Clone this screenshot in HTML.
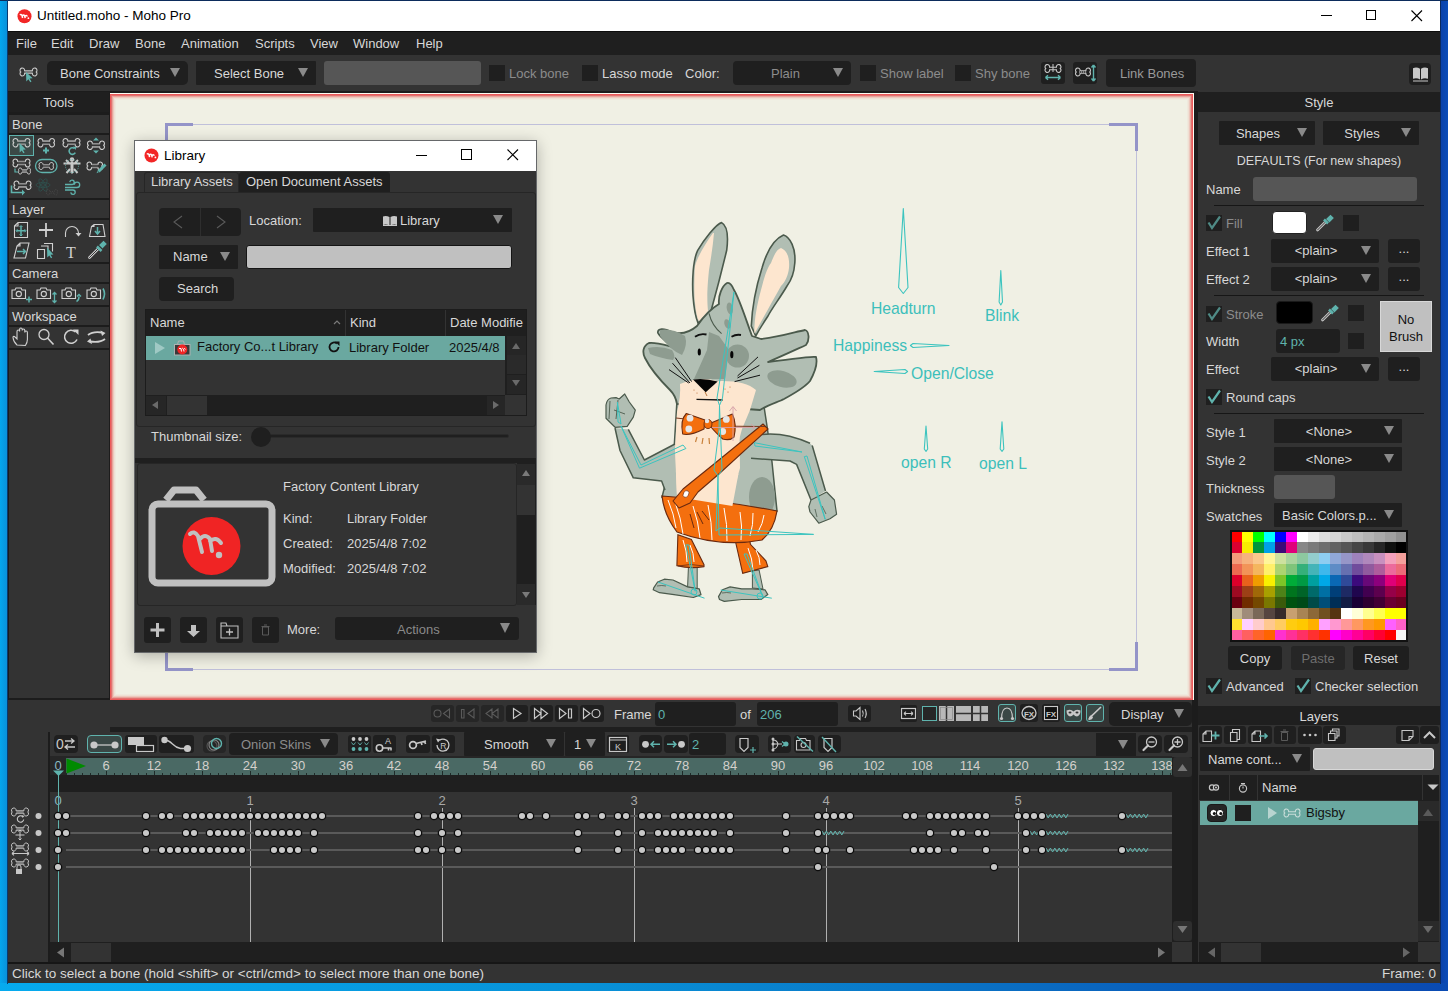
<!DOCTYPE html>
<html><head><meta charset="utf-8">
<style>
*{box-sizing:border-box;margin:0;padding:0}
html,body{width:1448px;height:991px;overflow:hidden;background:#0a62c8;font-family:"Liberation Sans",sans-serif;font-size:13px;color:#d8d8d8;position:relative}
.a{position:absolute}
.t{position:absolute;white-space:nowrap;line-height:13px;height:13px}
.g{color:#8c8c8c}
svg{overflow:visible}
</style></head>
<body>
<div class="a" style="left:0px;top:0px;width:8px;height:991px;background:linear-gradient(90deg,#04a6ee,#0a8ed8);"></div>
<div class="a" style="left:1440px;top:0px;width:8px;height:991px;background:linear-gradient(90deg,#0a40a8,#0a4cb8);"></div>
<div class="a" style="left:0px;top:983px;width:1448px;height:8px;background:linear-gradient(90deg,#06aaee 0%,#0892d8 40%,#0a78c8 62%,#0a60bc 80%,#0a4ab2 100%);"></div>
<div class="a" style="left:0px;top:0px;width:1448px;height:1px;background:#0c2c5c;"></div>
<div class="a" style="left:7px;top:0px;width:1px;height:984px;background:#0a3a70;"></div>
<div class="a" style="left:1440px;top:0px;width:1px;height:984px;background:#0a2a60;"></div>
<div class="a" style="left:8px;top:1px;width:1432px;height:982px;background:#333;"></div>
<div class="a" style="left:8px;top:1px;width:1432px;height:30px;background:#fff;"></div>
<svg class="a" style="left:17px;top:9px;" width="15" height="15" viewBox="0 0 15 15"><circle cx="7.5" cy="7.3" r="7" fill="#f22626"/><path d="M3 6.2q1-1.6 2 0.2l0.6 2.6M5.4 7q1.2-1.8 2.3 0l0.5 2.2M8 7.2q1.4-1.6 2.4 0.3" stroke="#fff" stroke-width="1.5" fill="none"/><circle cx="11.4" cy="9.2" r="0.9" fill="#fff"/></svg>
<div class="t" style="left:37px;top:9px;color:#000;font-size:13.5px;">Untitled.moho - Moho Pro</div>
<div class="a" style="left:1321px;top:15px;width:11px;height:1px;background:#000;"></div>
<div class="a" style="left:1366px;top:10px;width:10px;height:10px;background:transparent;border:1px solid #000"></div>
<svg class="a" style="left:1411px;top:10px;" width="12" height="12" viewBox="0 0 12 12"><path d="M0.5 0.5L11 11M11 0.5L0.5 11" stroke="#000" stroke-width="1.1"/></svg>
<div class="a" style="left:8px;top:31px;width:1432px;height:24px;background:#1f1f1f;border-top:1px solid #0c0c0c"></div>
<div class="t" style="left:16px;top:37px;">File</div>
<div class="t" style="left:51px;top:37px;">Edit</div>
<div class="t" style="left:89px;top:37px;">Draw</div>
<div class="t" style="left:135px;top:37px;">Bone</div>
<div class="t" style="left:181px;top:37px;">Animation</div>
<div class="t" style="left:255px;top:37px;">Scripts</div>
<div class="t" style="left:310px;top:37px;">View</div>
<div class="t" style="left:353px;top:37px;">Window</div>
<div class="t" style="left:416px;top:37px;">Help</div>
<div class="a" style="left:8px;top:55px;width:1432px;height:36px;background:#333;"></div>
<svg class="a" style="left:18px;top:63px;" width="24" height="22" viewBox="0 0 24 22"><path d="M6.59 7.80H14.41A2.32 2.32 0 1 1 18.28 9.00A2.32 2.32 0 1 1 14.41 10.20H6.59A2.32 2.32 0 1 1 2.72 9.00A2.32 2.32 0 1 1 6.59 7.80Z" fill="none" stroke="#c8c8c8" stroke-width="1.1"/><path d="M6.5 9H14.5" stroke="#8a8a8a" stroke-width="1.5"/><path d="M8 9l0.3 9.5l2.1-2.2l1.9 3l1.2-0.7l-1.9-3l3.1-0.3z" fill="#5fb3ad"/></svg>
<div class="a" style="left:47px;top:61px;width:141px;height:24px;background:#1f1f1f;border-radius:5px"></div><div class="t" style="left:60px;top:67px;">Bone Constraints</div><div class="a" style="left:170px;top:68px;width:0;height:0;border-left:5.0px solid transparent;border-right:5.0px solid transparent;border-top:9px solid #8a8a8a"></div>
<div class="a" style="left:196px;top:61px;width:120px;height:24px;background:#1f1f1f;border-radius:1px"></div><div class="t" style="left:214px;top:67px;">Select Bone</div><div class="a" style="left:298px;top:68px;width:0;height:0;border-left:5.0px solid transparent;border-right:5.0px solid transparent;border-top:9px solid #8a8a8a"></div>
<div class="a" style="left:324px;top:61px;width:157px;height:24px;background:#565656;border-radius:3px"></div>
<div class="a" style="left:489px;top:65px;width:16px;height:16px;background:#1f1f1f;"></div>
<div class="t" style="left:509px;top:67px;color:#8c8c8c;">Lock bone</div>
<div class="a" style="left:582px;top:65px;width:16px;height:16px;background:#1f1f1f;"></div>
<div class="t" style="left:602px;top:67px;">Lasso mode</div>
<div class="t" style="left:685px;top:67px;">Color:</div>
<div class="a" style="left:733px;top:61px;width:118px;height:24px;background:#1f1f1f;border-radius:4px"></div><div class="t" style="left:771px;top:67px;color:#8c8c8c;">Plain</div><div class="a" style="left:833px;top:68px;width:0;height:0;border-left:5.0px solid transparent;border-right:5.0px solid transparent;border-top:9px solid #8a8a8a"></div>
<div class="a" style="left:860px;top:65px;width:16px;height:16px;background:#1f1f1f;"></div>
<div class="t" style="left:880px;top:67px;color:#8c8c8c;">Show label</div>
<div class="a" style="left:955px;top:65px;width:16px;height:16px;background:#1f1f1f;"></div>
<div class="t" style="left:975px;top:67px;color:#8c8c8c;">Shy bone</div>
<div class="a" style="left:1041px;top:62px;width:24px;height:22px;background:#1f1f1f;border-radius:3px"></div>
<svg class="a" style="left:1043px;top:63px;" width="20" height="20" viewBox="0 0 20 20"><path d="M6.59 4.30H13.41A2.32 2.32 0 1 1 17.28 5.50A2.32 2.32 0 1 1 13.41 6.70H6.59A2.32 2.32 0 1 1 2.72 5.50A2.32 2.32 0 1 1 6.59 4.30Z" fill="none" stroke="#c8c8c8" stroke-width="1.1"/><path d="M10 1v8" stroke="#c8c8c8" stroke-width="1"/><path d="M2.5 14.5h15M2.5 14.5l2.5-2.2M2.5 14.5l2.5 2.2M17.5 14.5l-2.5-2.2M17.5 14.5l-2.5 2.2" stroke="#5fb3ad" stroke-width="1.4" fill="none"/></svg>
<div class="a" style="left:1073px;top:62px;width:24px;height:22px;background:#1f1f1f;border-radius:3px"></div>
<svg class="a" style="left:1074px;top:63px;" width="22" height="20" viewBox="0 0 22 20"><path d="M6.09 7.80H11.91A2.32 2.32 0 1 1 15.78 9.00A2.32 2.32 0 1 1 11.91 10.20H6.09A2.32 2.32 0 1 1 2.22 9.00A2.32 2.32 0 1 1 6.09 7.80Z" fill="none" stroke="#c8c8c8" stroke-width="1.1"/><path d="M5 9h8" stroke="#c8c8c8" stroke-width="1" stroke-dasharray="1 1"/><path d="M19.5 2v16M19.5 2l-2 2.5M19.5 2l2 2.5M19.5 18l-2-2.5M19.5 18l2-2.5" stroke="#5fb3ad" stroke-width="1.4" fill="none"/></svg>
<div class="a" style="left:1106px;top:59px;width:90px;height:28px;background:#1f1f1f;border-radius:4px"></div>
<div class="t" style="left:1120px;top:67px;color:#9a9a9a;">Link Bones</div>
<div class="a" style="left:1409px;top:63px;width:22px;height:22px;background:#1f1f1f;border-radius:4px"></div>
<svg class="a" style="left:1412px;top:66px;" width="17" height="16" viewBox="0 0 17 16"><path d="M1 2.2q3.8-1.4 7 0.6v10.6q-3.2-1.8-7-0.6z M9 2.8q3.2-2 7-0.6v10.6q-3.8-1.2-7 0.6z" fill="#c8c8c8"/><path d="M1 15h15" stroke="#c8c8c8" stroke-width="1"/></svg>
<div class="a" style="left:8px;top:91px;width:101px;height:609px;background:#1c1c1c;"></div>
<div class="a" style="left:8px;top:92px;width:101px;height:20px;background:#1f1f1f;"></div>
<div class="t" style="left:8px;top:96px;width:101px;text-align:center;">Tools</div>
<div class="a" style="left:9px;top:115px;width:100px;height:18px;background:#333;"></div>
<div class="t" style="left:12px;top:118px;">Bone</div>
<div class="a" style="left:9px;top:135px;width:100px;height:63px;background:#333;"></div>
<div class="a" style="left:9px;top:200px;width:100px;height:18px;background:#333;"></div>
<div class="t" style="left:12px;top:203px;">Layer</div>
<div class="a" style="left:9px;top:220px;width:100px;height:42px;background:#333;"></div>
<div class="a" style="left:9px;top:264px;width:100px;height:18px;background:#333;"></div>
<div class="t" style="left:12px;top:267px;">Camera</div>
<div class="a" style="left:9px;top:284px;width:100px;height:21px;background:#333;"></div>
<div class="a" style="left:9px;top:307px;width:100px;height:18px;background:#333;"></div>
<div class="t" style="left:12px;top:310px;">Workspace</div>
<div class="a" style="left:9px;top:327px;width:100px;height:21px;background:#333;"></div>
<div class="a" style="left:9px;top:350px;width:100px;height:349px;background:#333;"></div>
<div class="a" style="left:9px;top:135px;width:25px;height:21px;background:#3b4947;border:1px solid #5fb3ad"></div>
<svg class="a" style="left:0px;top:0px;pointer-events:none" width="1448" height="991" viewBox="0 0 1448 991"><path d="M17.92 141.13H25.08A2.46 2.46 0 1 1 29.23 142.75A2.46 2.46 0 1 1 25.08 144.37H17.92A2.46 2.46 0 1 1 13.77 142.75A2.46 2.46 0 1 1 17.92 141.13Z" fill="none" stroke="#d0d0d0" stroke-width="1.1"/><path d="M17.92 141.13H25.08M17.92 144.37H25.08" stroke="#8e8e8e" stroke-width="1.4"/><path d="M19.5 143l0.2 9.5l2-2l1.7 2.8l1.2-0.7l-1.7-2.8l2.9-0.4z" fill="#5fb3ad"/><path d="M42.92 141.13H49.58A2.46 2.46 0 1 1 53.73 142.75A2.46 2.46 0 1 1 49.58 144.37H42.92A2.46 2.46 0 1 1 38.77 142.75A2.46 2.46 0 1 1 42.92 141.13Z" fill="none" stroke="#d0d0d0" stroke-width="1.1"/><path d="M42.92 141.13H49.58M42.92 144.37H49.58" stroke="#8e8e8e" stroke-width="1.4"/><path d="M46 147.5v6M43 150.5h6" stroke="#5fb3ad" stroke-width="2"/><path d="M67.92 141.13H75.08A2.46 2.46 0 1 1 79.23 142.75A2.46 2.46 0 1 1 75.08 144.37H67.92A2.46 2.46 0 1 1 63.77 142.75A2.46 2.46 0 1 1 67.92 141.13Z" fill="none" stroke="#d0d0d0" stroke-width="1.1"/><path d="M67.92 141.13H75.08M67.92 144.37H75.08" stroke="#8e8e8e" stroke-width="1.4"/><path d="M74.5 148.5a3.3 3.3 0 1 0 0.8 4.2" stroke="#5fb3ad" stroke-width="1.6" fill="none"/><path d="M73 146.5l3.5 0.5l-1 3z" fill="#5fb3ad"/><path d="M92.42 143.63H99.58A2.46 2.46 0 1 1 103.73 145.25A2.46 2.46 0 1 1 99.58 146.87H92.42A2.46 2.46 0 1 1 88.27 145.25A2.46 2.46 0 1 1 92.42 143.63Z" fill="none" stroke="#d0d0d0" stroke-width="1.1"/><path d="M92.42 143.63H99.58M92.42 146.87H99.58" stroke="#8e8e8e" stroke-width="1.4"/><path d="M93 140.5l3-3l3 3z M93 150.5l3 3l3-3z" fill="#5fb3ad"/><path d="M17.63 161.48H25.37A2.32 2.32 0 1 1 29.28 163.00A2.32 2.32 0 1 1 25.37 164.52H17.63A2.32 2.32 0 1 1 13.72 163.00A2.32 2.32 0 1 1 17.63 161.48Z" fill="none" stroke="#d0d0d0" stroke-width="1.1"/><path d="M17.63 161.48H25.37M17.63 164.52H25.37" stroke="#8e8e8e" stroke-width="1.4"/><path d="M21.98 169.86H27.02A1.74 1.74 0 1 1 29.96 171.00A1.74 1.74 0 1 1 27.02 172.14H21.98A1.74 1.74 0 1 1 19.04 171.00A1.74 1.74 0 1 1 21.98 169.86Z" fill="none" stroke="#d0d0d0" stroke-width="1"/><path d="M21.98 169.86H27.02M21.98 172.14H27.02" stroke="#8e8e8e" stroke-width="1.4"/><path d="M15 168.5v3.5h3" stroke="#5fb3ad" stroke-width="1.2" fill="none"/><rect x="35.5" y="159.5" width="21.5" height="13" rx="6.5" fill="none" stroke="#5fb3ad" stroke-width="1.3"/><path d="M43.06 164.67H49.44A2.03 2.03 0 1 1 52.87 166.00A2.03 2.03 0 1 1 49.44 167.33H43.06A2.03 2.03 0 1 1 39.63 166.00A2.03 2.03 0 1 1 43.06 164.67Z" fill="none" stroke="#d0d0d0" stroke-width="1"/><path d="M43.06 164.67H49.44M43.06 167.33H49.44" stroke="#8e8e8e" stroke-width="1.4"/><circle cx="72" cy="159.5" r="2.2" fill="#c8c8c8"/><path d="M72 161.5v12M63.5 163.5h17M66 160l4 4M78 160l-4 4M66.5 173l3.5-4M77.5 173l-3.5-4" stroke="#c8c8c8" stroke-width="2"/><path d="M72 162v11" stroke="#c8c8c8" stroke-width="3"/><circle cx="72" cy="166" r="6.5" fill="none" stroke="#5fb3ad" stroke-width="0.8" stroke-dasharray="1 1"/><path d="M91.63 164.48H97.87A2.32 2.32 0 1 1 101.78 166.00A2.32 2.32 0 1 1 97.87 167.52H91.63A2.32 2.32 0 1 1 87.72 166.00A2.32 2.32 0 1 1 91.63 164.48Z" fill="none" stroke="#d0d0d0" stroke-width="1.1"/><path d="M91.63 164.48H97.87M91.63 167.52H97.87" stroke="#8e8e8e" stroke-width="1.4"/><path d="M105.5 164.5l-7 7" stroke="#5fb3ad" stroke-width="3"/><path d="M97.5 171l-1 2.2l2.2-1z" fill="#5fb3ad"/><path d="M18.92 183.63H26.08A2.46 2.46 0 1 1 30.23 185.25A2.46 2.46 0 1 1 26.08 186.87H18.92A2.46 2.46 0 1 1 14.77 185.25A2.46 2.46 0 1 1 18.92 183.63Z" fill="none" stroke="#d0d0d0" stroke-width="1.1"/><path d="M18.92 183.63H26.08M18.92 186.87H26.08" stroke="#8e8e8e" stroke-width="1.4"/><path d="M11.5 185.5v7h11" stroke="#5fb3ad" stroke-width="1.6" fill="none"/><path d="M22 189.5l3 3l-3 3z" fill="#5fb3ad"/><g stroke="#2e5350" stroke-width="0.7" fill="none"><circle cx="43" cy="185" r="1.5"/><ellipse cx="43" cy="185" rx="7" ry="2.5"/><ellipse cx="43" cy="185" rx="7" ry="2.5" transform="rotate(60 43 185)"/><ellipse cx="43" cy="185" rx="7" ry="2.5" transform="rotate(-60 43 185)"/></g><path d="M49.66 191.43H54.34A1.59 1.59 0 1 1 57.01 192.25A1.59 1.59 0 1 1 54.34 193.07H49.66A1.59 1.59 0 1 1 46.99 192.25A1.59 1.59 0 1 1 49.66 191.43Z" fill="none" stroke="#4a4a4a" stroke-width="0.8" stroke-dasharray="1.2 1"/><path d="M65 184.5h7a2.2 2.2 0 1 0 -2.2-2.4M65 187.5h12a2.7 2.7 0 1 0 -2.7-2.9M65 190h8a2.2 2.2 0 1 1 -2.2 2.4" stroke="#5fb3ad" stroke-width="1.3" fill="none"/><path d="M14.5 226l3.5-3.5h9.5v15h-13z M14.5 226h3.5v-3.5" fill="none" stroke="#d0d0d0" stroke-width="1.1"/><path d="M21 226v9.5M16.5 230.7h9" stroke="#5fb3ad" stroke-width="1.5"/><path d="M19.5 227l1.5-1.5l1.5 1.5M19.5 234.5l1.5 1.5l1.5-1.5M17.5 229.2l-1.5 1.5l1.5 1.5M24.5 229.2l1.5 1.5l-1.5 1.5" stroke="#5fb3ad" stroke-width="1" fill="none"/><path d="M46 223v14M39 230h14" stroke="#d0d0d0" stroke-width="1.8"/><path d="M65.5 237v-4a6.5 6.5 0 0 1 13 0" fill="none" stroke="#d0d0d0" stroke-width="1.1"/><path d="M75.5 233h6l-3 3.5z" fill="#d0d0d0"/><path d="M89.5 236.5l2-10l2.5-2h9l2 12z M91.5 226.5h2.5v-2.2" fill="none" stroke="#d0d0d0" stroke-width="1.1"/><path d="M97.5 227v6.5M95 231l2.5 3l2.5-3" stroke="#5fb3ad" stroke-width="1.5" fill="none"/><path d="M14 258l3-12l3-3h9l-3.5 15z M17 246h3v-3" fill="none" stroke="#d0d0d0" stroke-width="1.1"/><path d="M17 251.5h8M23 249l2.5 2.5l-2.5 2.5" stroke="#5fb3ad" stroke-width="1.5" fill="none"/><path d="M37.5 249.5h7v9h-7z M41 246h7v3.5" fill="none" stroke="#d0d0d0" stroke-width="1.1"/><path d="M44 243.5h8.5v8" fill="none" stroke="#d0d0d0" stroke-width="1.1"/><path d="M47 247.5l0.3 10l2-2l1.7 2.8l1.2-0.7l-1.7-2.8l2.9-0.3z" fill="#5fb3ad"/><text x="71" y="257.5" font-family="Liberation Serif" font-size="16" fill="#d0d0d0" text-anchor="middle">T</text><path d="M89.5 257.5l8.5-8.5" stroke="#d0d0d0" stroke-width="2.6" stroke-linecap="round"/><path d="M89.5 257.5l8.5-8.5" stroke="#333" stroke-width="1" stroke-linecap="round"/><path d="M97 246.5l4.5 4.5M100 246l3.5-3.5l1.5 1.5l-3.5 3.5" stroke="#5fb3ad" stroke-width="2.5"/><path d="M12 290.0h3l1-2h5l1 2h3.5v8.5h-13.5z" fill="none" stroke="#d0d0d0" stroke-width="1.1"/><circle cx="18.8" cy="294.0" r="2.6" fill="none" stroke="#d0d0d0" stroke-width="1.1"/><path d="M29 296.5v6M26 299.5h6" stroke="#5fb3ad" stroke-width="1.5"/><path d="M37 290.0h3l1-2h5l1 2h3.5v8.5h-13.5z" fill="none" stroke="#d0d0d0" stroke-width="1.1"/><circle cx="43.8" cy="294.0" r="2.6" fill="none" stroke="#d0d0d0" stroke-width="1.1"/><path d="M54.5 292.5v10M52.5 294.5l2-2l2 2M52.5 300.5l2 2l2-2" stroke="#5fb3ad" stroke-width="1.3" fill="none"/><path d="M62 290.0h3l1-2h5l1 2h3.5v8.5h-13.5z" fill="none" stroke="#d0d0d0" stroke-width="1.1"/><circle cx="68.8" cy="294.0" r="2.6" fill="none" stroke="#d0d0d0" stroke-width="1.1"/><path d="M76.5 301.5q2.5-1 2.5-5M77 296.5l2-2l2 2" stroke="#5fb3ad" stroke-width="1.4" fill="none"/><path d="M87 290.0h3l1-2h5l1 2h3.5v8.5h-13.5z" fill="none" stroke="#d0d0d0" stroke-width="1.1"/><circle cx="93.8" cy="294.0" r="2.6" fill="none" stroke="#d0d0d0" stroke-width="1.1"/><path d="M103 288.5q3 5 0 11" stroke="#5fb3ad" stroke-width="1.6" fill="none"/><path d="M17 345q-3.5-3-4-7.5q0-1.5 1.5-1l2.5 2.5v-7.5q0-1.5 1.3-1.5t1.3 1.5v-2q0-1.5 1.3-1.5t1.3 1.5v1q0-1.5 1.3-1.5t1.3 1.5v2q0-1.5 1.3-1.5t1.3 1.5v7q0 3-2 6z" fill="none" stroke="#d0d0d0" stroke-width="1.1"/><circle cx="44" cy="334.5" r="5" fill="none" stroke="#d0d0d0" stroke-width="1.3"/><path d="M47.5 338l6 6.5" stroke="#d0d0d0" stroke-width="1.6"/><path d="M77 339.5a6.5 6.5 0 1 1 -1.5-7.5" fill="none" stroke="#d0d0d0" stroke-width="1.6"/><path d="M73 329.5h5.5v5.5z" fill="#d0d0d0"/><path d="M88 335q5-4 14-2.5M105 339q-5 4-15 2.5" fill="none" stroke="#d0d0d0" stroke-width="1.8"/><path d="M100.5 330.5l5 2.5l-3.5 3z M92 344l-5-2.5l3.5-3z" fill="#d0d0d0"/></svg>
<div class="a" style="left:109px;top:91px;width:1089px;height:610px;background:#1c1c1c;"></div>
<div class="a" style="left:110px;top:93px;width:1084px;height:607px;background:#f0f0e4;"></div>
<div class="a" style="left:110px;top:94px;width:1px;height:606px;background:rgba(236,90,90,1);"></div>
<div class="a" style="left:1192px;top:94px;width:1px;height:606px;background:rgba(236,90,90,1);"></div>
<div class="a" style="left:111px;top:94px;width:1081px;height:1px;background:rgba(236,90,90,1);"></div>
<div class="a" style="left:111px;top:699px;width:1081px;height:1px;background:rgba(236,90,90,1);"></div>
<div class="a" style="left:111px;top:95px;width:1px;height:604px;background:rgba(226,106,106,0.95);"></div>
<div class="a" style="left:1191px;top:95px;width:1px;height:604px;background:rgba(226,106,106,0.95);"></div>
<div class="a" style="left:112px;top:95px;width:1079px;height:1px;background:rgba(226,106,106,0.95);"></div>
<div class="a" style="left:112px;top:698px;width:1079px;height:1px;background:rgba(226,106,106,0.95);"></div>
<div class="a" style="left:112px;top:96px;width:1px;height:602px;background:rgba(228,120,110,0.62);"></div>
<div class="a" style="left:1190px;top:96px;width:1px;height:602px;background:rgba(228,120,110,0.62);"></div>
<div class="a" style="left:113px;top:96px;width:1077px;height:1px;background:rgba(228,120,110,0.62);"></div>
<div class="a" style="left:113px;top:697px;width:1077px;height:1px;background:rgba(228,120,110,0.62);"></div>
<div class="a" style="left:113px;top:97px;width:1px;height:600px;background:rgba(232,110,100,0.30);"></div>
<div class="a" style="left:1189px;top:97px;width:1px;height:600px;background:rgba(232,110,100,0.30);"></div>
<div class="a" style="left:114px;top:97px;width:1075px;height:1px;background:rgba(232,110,100,0.30);"></div>
<div class="a" style="left:114px;top:696px;width:1075px;height:1px;background:rgba(232,110,100,0.30);"></div>
<div class="a" style="left:114px;top:98px;width:1px;height:598px;background:rgba(232,110,100,0.13);"></div>
<div class="a" style="left:1188px;top:98px;width:1px;height:598px;background:rgba(232,110,100,0.13);"></div>
<div class="a" style="left:115px;top:98px;width:1073px;height:1px;background:rgba(232,110,100,0.13);"></div>
<div class="a" style="left:115px;top:695px;width:1073px;height:1px;background:rgba(232,110,100,0.13);"></div>
<div class="a" style="left:115px;top:99px;width:1px;height:596px;background:rgba(232,110,100,0.05);"></div>
<div class="a" style="left:1187px;top:99px;width:1px;height:596px;background:rgba(232,110,100,0.05);"></div>
<div class="a" style="left:116px;top:99px;width:1071px;height:1px;background:rgba(232,110,100,0.05);"></div>
<div class="a" style="left:116px;top:694px;width:1071px;height:1px;background:rgba(232,110,100,0.05);"></div>
<div class="a" style="left:110px;top:93px;width:1084px;height:1px;background:#fbfbf2;"></div>
<div class="a" style="left:1193px;top:93px;width:1px;height:607px;background:#fbfbf2;"></div>
<svg class="a" style="left:0px;top:0px;pointer-events:none" width="1448" height="991" viewBox="0 0 1448 991"><path d="M166.5 124.5H1136.5V669.5H166.5Z" fill="none" stroke="#c0c0da" stroke-width="1"/><path d="M166.5 151V124.5H193" fill="none" stroke="#9494c8" stroke-width="3"/><path d="M1109 124.5H1136.5V151" fill="none" stroke="#9494c8" stroke-width="3"/><path d="M1136.5 642V669.5H1109" fill="none" stroke="#9494c8" stroke-width="3"/><path d="M193 669.5H166.5V642" fill="none" stroke="#9494c8" stroke-width="3"/><path d="M721.6 222.6C716 224 704 240 697.7 250.3C693 260 692 280 693 296C694 310 696 318 698 323L711 311C716 293 722 270 726.7 250.3C728 240 728 226 721.6 222.6Z" fill="#b1beb3" stroke="#4b5a4c" stroke-width="1.6"/><path d="M713 233C705 244 697 258 695 266C694 280 694 295 695 303C696 312 697 318 699 321L708 311C707 300 707 290 709 270C711 258 713 245 714 233Z" fill="#fde6cf"/><path d="M783.5 235C790 237 796 248 794.8 263C794 275 790 282 787 286C780 298 772 308 768 316C764 322 759 330 755.7 336L751.3 326C752 310 755 290 762 268C766 254 772 240 783.5 235Z" fill="#b1beb3" stroke="#4b5a4c" stroke-width="1.6"/><path d="M781 248C786 250 790 256 789 268C788 276 785 282 781 286C772 302 762 320 754.4 333.6C754 320 757 305 760.8 290.7C764 278 767 268 771 263C774 255 777 249 781 248Z" fill="#fde6cf"/><path d="M677 400L674 450L662 497L777 511L772 462L767 426L763 400Z" fill="#b1beb3" stroke="#4b5a4c" stroke-width="1.5"/><path d="M680 405L739 405L740 468L732 497L677 497L675 450Z" fill="#fde6cf"/><ellipse cx="762" cy="497" rx="13" ry="20" fill="#8e9c90"/><path d="M675 444L644.4 460L628.3 429.4L615 428L620 450.5L633.3 477.8L661.6 481L665 490L676 470Z" fill="#b1beb3"/><path d="M675 444L644.4 460L628.3 429.4M615 428L620 450.5L633.3 477.8L661.6 481L665 490" fill="none" stroke="#4b5a4c" stroke-width="1.5" stroke-linejoin="round"/><path d="M606 405Q607 399 611 398L616 397.6L619.2 399L624.7 394L629.3 402L635.3 410.2L633.3 417.2L627.2 426.3L615.1 427.3L606 418.3Z" fill="#b1beb3" stroke="#4b5a4c" stroke-width="1.2" stroke-linejoin="round"/><path d="M610 401L609 419M618 400L616 419M614 410L625 414" stroke="#4b5a4c" stroke-width="0.9" fill="none"/><path d="M762 434.4Q785 432 810 443.3L812.2 445.5L825.5 491L811 500L796.6 464.4L790 461L751 458.3L755 440Z" fill="#b1beb3"/><path d="M762 434.4Q785 432 810 443.3M812.2 445.5L825.5 491M811 500L796.6 464.4L790 461L751 458.3" fill="none" stroke="#4b5a4c" stroke-width="1.5" stroke-linejoin="round"/><path d="M808.8 506.6L810 512L818.8 523.2L830 518.8L836.6 514.3L834.4 500L826.6 492L811 500Z" fill="#b1beb3" stroke="#4b5a4c" stroke-width="1.2" stroke-linejoin="round"/><path d="M815 509L817 517M822 506L826 514" stroke="#4b5a4c" stroke-width="0.8" fill="none"/><path d="M688.5 565L697.2 565L697.2 589L687.6 587Z" fill="#b1beb3" stroke="#4b5a4c" stroke-width="1"/><path d="M752.4 571L759.1 570L763 589L752.4 588Z" fill="#b1beb3" stroke="#4b5a4c" stroke-width="1"/><path d="M653.7 587.9L657.6 582L664.3 579.2L673 580L687.6 586.9L699.2 588.8L701 594.6L693.4 597.5L674 594.6L659.5 592.7L653.2 589.8Z" fill="#b1beb3" stroke="#4b5a4c" stroke-width="1.2" stroke-linejoin="round"/><path d="M718.5 596.6L722.4 589.8L730.1 586.9L741.7 588.8L752.4 588.8L765 589.8L767.8 594.6L761 599.5L741.7 599.5L724.3 601.4L719.5 599.5Z" fill="#b1beb3" stroke="#4b5a4c" stroke-width="1.2" stroke-linejoin="round"/><path d="M657 586Q662 585 666 586M722 593Q727 592 731 593" stroke="#4b5a4c" stroke-width="0.8" fill="none"/><path d="M677.9 534.7L676.9 565.6Q690 569 704 566.6L704 564.7L691.4 539.5Z" fill="#f46f0e" stroke="#6a2a10" stroke-width="1.1"/><path d="M678 566Q690 563 704 566" fill="none" stroke="#6a2a10" stroke-width="0.8"/><path d="M735 539.5L742.7 573.4L767.8 566.6L765.9 560.8L750.4 544.3L749.4 537.6Z" fill="#f46f0e" stroke="#6a2a10" stroke-width="1.1"/><path d="M662 496Q720 500 777 511Q774 530 762 540Q720 548 677 532Q664 515 662 496Z" fill="#f46f0e" stroke="#6a2a10" stroke-width="1.2"/><g stroke="#fff" stroke-width="1" fill="none"><path d="M668 500Q674.0 514.0 676 528"/><path d="M675 502Q681.0 518.0 683 534"/><path d="M693 506Q698.5 522.0 700 538"/><path d="M708 505Q712.0 522.5 712 540"/><path d="M724 508Q727.5 524.5 727 541"/><path d="M740 512Q742.5 526.0 741 540"/><path d="M753 513Q753.5 524.5 750 536"/><path d="M764 515Q763.0 523.5 758 532"/><path d="M683 540Q687.0 551.0 687 562"/><path d="M690 545Q694.0 553.5 694 562"/><path d="M748 548Q752.5 559.0 753 570"/><path d="M756 550Q760.0 557.5 760 565"/></g><path d="M690 514l4 14M697 512l6 12M702 511l7 9" stroke="#6a2a10" stroke-width="1" fill="none"/><path d="M727 283C722 286 718 296 719 304C712 308 704 316 697 326C690 332 682 335 672 332C664 328 657 328 658 333C660 338 668 342 673 347C665 345 655 342 649 343C643 346 642 352 645 358C650 368 660 380 670 390C674 394 676 398 677 404L760 410C768 405 778 402 784 399C795 393 806 386 810 381C815 372 818 364 816 357C808 356 790 360 768 362C780 357 795 350 806 345C810 340 809 331 805 330C795 332 780 337 761 339L752 336C746 320 740 300 734 290C732 285 730 282 727 283Z" fill="#b1beb3" stroke="#4b5a4c" stroke-width="1.8" stroke-linejoin="round"/><path d="M709 332L719 336L729 350L725 379L694 379L707 350Z" fill="#8e9c90"/><circle cx="737.5" cy="356" r="11.5" fill="#8e9c90"/><ellipse cx="782" cy="379" rx="15" ry="8" transform="rotate(15 782 379)" fill="#8e9c90"/><path d="M660 330Q672 328 685 336Q688 345 682 355Q670 350 660 336Z" fill="#8e9c90"/><path d="M648 348Q660 345 672 350Q676 356 673 360Q660 358 650 354Z" fill="#8e9c90"/><ellipse cx="729.8" cy="308.4" rx="3" ry="6" transform="rotate(-10 729.8 308.4)" fill="#8e9c90"/><ellipse cx="727.5" cy="324" rx="3" ry="5" transform="rotate(-20 727.5 324)" fill="#8e9c90"/><path d="M709 313.4Q712 326 721.6 333.6" stroke="#4b5a4c" stroke-width="1.1" fill="none"/><path d="M680 384Q700 376 717 381Q745 380 756 390L750 410L742 429L735 455L733.6 472.7L738.4 474L732.4 506L677 497L675 450L677 412Q681 396 680 384Z" fill="#fde6cf"/><path d="M693 379.5Q705 378 717.7 381.6L705.7 392.2Z" fill="#050505"/><path d="M696.5 399.3L722.6 400" stroke="#111" stroke-width="1.3"/><path d="M705 392l2 4" stroke="#b36a2a" stroke-width="0.9"/><ellipse cx="699.3" cy="352" rx="1.6" ry="3.6" fill="#050505"/><ellipse cx="731.8" cy="354.7" rx="1.6" ry="3.6" fill="#050505"/><path d="M695 336.8Q700 333 706.5 334.5M731.5 336.8Q736 334 741 335" stroke="#111" stroke-width="1.8" fill="none"/><path d="M675.3 357.6L691.6 381.6M672.5 363.2L690 383M669 369.6L688.7 383M758 356.9L737.5 376M759.4 365.3L737.5 378M760 375.2L734.6 381.6" stroke="#111" stroke-width="1" fill="none"/><circle cx="694" cy="390" r="0.6" fill="#c0703a"/><circle cx="697" cy="393" r="0.6" fill="#c0703a"/><circle cx="725" cy="389" r="0.6" fill="#c0703a"/><circle cx="728" cy="392" r="0.6" fill="#c0703a"/><circle cx="730" cy="387" r="0.6" fill="#c0703a"/><path d="M763 424L768 429L720 473L698 492L690 503L679 508L673 501L683 489L714 464Z" fill="#f46f0e" stroke="#6a2a10" stroke-width="1.1" stroke-linejoin="round"/><ellipse cx="686" cy="494" rx="2.6" ry="3.6" transform="rotate(30 686 494)" fill="#fff" stroke="#6a2a10" stroke-width="0.6"/><path d="M676 418L704 421M712 426L765 426.5" stroke="#7a3a20" stroke-width="1.1" fill="none"/><path d="M705 420L686.3 413.5Q680 420 682.7 434Q690 436 704 429Z" fill="#f46f0e" stroke="#6a2a10" stroke-width="1.1" stroke-linejoin="round"/><path d="M711 423L732.4 414Q737 424 734 437Q730 441 722.7 439Q715 432 711 427Z" fill="#f46f0e" stroke="#6a2a10" stroke-width="1.1" stroke-linejoin="round"/><ellipse cx="708" cy="424" rx="4" ry="4.6" fill="#f46f0e" stroke="#6a2a10" stroke-width="0.9"/><circle cx="690" cy="418.2" r="3.4" fill="#e6e6e6"/><circle cx="688.8" cy="429" r="3.4" fill="#e6e6e6"/><circle cx="726.3" cy="419.4" r="3.4" fill="#e6e6e6"/><circle cx="722.7" cy="431.5" r="3.4" fill="#e6e6e6"/><circle cx="707" cy="421" r="2.2" fill="#e6e6e6"/><path d="M697 437l-1.5 5M703 438l-1 6M709 438l0.5 6" stroke="#c8803a" stroke-width="1.2"/><g stroke="#3cc4bf" stroke-width="1" fill="none" stroke-linejoin="round"><path d="M734 292L722.5 398L719.5 405.5L717 398Z"/><path d="M719.5 405.5L719 430L714 470L718 476L722 470Z"/><path d="M718 476L716 531L720 528L813.6 534.4L719 535Z"/><path d="M617.4 402L621 424L618 422Z"/><path d="M621 426L639.5 468.2L685.9 448.5L683 445L641 465Z"/><path d="M754.4 442.7L802 452L755 446Z"/><path d="M804.3 456.6L825.2 519.3L807 456Z"/><path d="M685.9 544.8L695.2 591.2L689 545Z"/><path d="M744 554L762.5 595.9L747 554Z"/><path d="M658 582L704.5 598.2M720.7 590L771.8 598.2"/><circle cx="694" cy="592" r="3"/><circle cx="760" cy="596" r="3"/></g><g stroke="#d6a0a8" stroke-width="0.9" fill="none"><path d="M733 441V407M729.5 411L733 406.5L736.5 411"/><path d="M712 427.5H755M751 424L755 427.5L751 431"/></g><g stroke="#3cc4bf" stroke-width="1.1" fill="none" stroke-linejoin="round"><path d="M903.3 208.5L908 287.5L903.3 293.5L898.6 287.5Z"/><path d="M1000.8 270.5L1002.5 302L1000.8 305L999.1 302Z"/><path d="M949 345.5L913 343.5L910.4 345.5L913 347.5Z"/><path d="M874.2 371.5L905 369.5L907.6 371.5L905 373.5Z"/><path d="M926 426L927.7 449L926 451.4L924.3 449Z"/><path d="M1002 421.8L1003.8 449L1002 451.4L1000.2 449Z"/></g></svg>
<div class="t" style="left:871px;top:302px;color:#3cbfbb;font-size:15.7px;">Headturn</div>
<div class="t" style="left:985px;top:309px;color:#3cbfbb;font-size:15.7px;">Blink</div>
<div class="t" style="left:833px;top:339px;color:#3cbfbb;font-size:15.7px;">Happiness</div>
<div class="t" style="left:911px;top:367px;color:#3cbfbb;font-size:15.7px;">Open/Close</div>
<div class="t" style="left:901px;top:456px;color:#3cbfbb;font-size:15.7px;">open R</div>
<div class="t" style="left:979px;top:457px;color:#3cbfbb;font-size:15.7px;">open L</div>
<div class="a" style="left:134px;top:140px;width:403px;height:513px;background:#333;border:1px solid #66686a;box-shadow:0 3px 14px rgba(0,0,0,0.28)"></div>
<div class="a" style="left:135px;top:141px;width:401px;height:30px;background:#fff;"></div>
<svg class="a" style="left:144px;top:148px;" width="15" height="15" viewBox="0 0 15 15"><circle cx="7.5" cy="7.5" r="7" fill="#f22626"/><path d="M3 6.4q1-1.6 2 0.2l0.6 2.6M5.4 7.2q1.2-1.8 2.3 0l0.5 2.2M8 7.4q1.4-1.6 2.4 0.3" stroke="#fff" stroke-width="1.5" fill="none"/><circle cx="11.4" cy="9.4" r="0.9" fill="#fff"/></svg>
<div class="t" style="left:164px;top:149px;color:#000;font-size:13.5px;">Library</div>
<div class="a" style="left:416px;top:155px;width:11px;height:1px;background:#000;"></div>
<div class="a" style="left:461px;top:149px;width:11px;height:11px;background:transparent;border:1px solid #000"></div>
<svg class="a" style="left:507px;top:149px;" width="12" height="12" viewBox="0 0 12 12"><path d="M0.5 0.5L11 11M11 0.5L0.5 11" stroke="#000" stroke-width="1.1"/></svg>
<div class="a" style="left:135px;top:171px;width:401px;height:481px;background:#333;"></div>
<div class="a" style="left:144px;top:172px;width:95px;height:21px;background:#333;border:1px solid #262626;border-bottom:none;border-radius:3px 3px 0 0"></div>
<div class="t" style="left:151px;top:175px;">Library Assets</div>
<div class="a" style="left:239px;top:172px;width:151px;height:21px;background:#1f1f1f;border-radius:3px 3px 0 0"></div>
<div class="t" style="left:246px;top:175px;">Open Document Assets</div>
<div class="a" style="left:136px;top:192px;width:400px;height:235px;background:#333;border:1px solid #262626;border-radius:3px"></div>
<div class="a" style="left:159px;top:208px;width:82px;height:28px;background:#1f1f1f;border-radius:4px"></div>
<div class="a" style="left:200px;top:208px;width:1px;height:28px;background:#2e2e2e;"></div>
<svg class="a" style="left:172px;top:214px;" width="12" height="16" viewBox="0 0 12 16"><path d="M10 2L2 8l8 6" stroke="#5a5a5a" stroke-width="1.1" fill="none"/></svg>
<svg class="a" style="left:215px;top:214px;" width="12" height="16" viewBox="0 0 12 16"><path d="M2 2l8 6l-8 6" stroke="#5a5a5a" stroke-width="1.1" fill="none"/></svg>
<div class="t" style="left:249px;top:214px;">Location:</div>
<div class="a" style="left:313px;top:208px;width:199px;height:24px;background:#1f1f1f;border-radius:1px"></div>
<svg class="a" style="left:382px;top:214px;" width="16" height="12" viewBox="0 0 16 12"><path d="M1 2.5q3-1 6.5 0.5v8.5q-3.5-1.5-6.5-0.5z M8.5 3q3-1.5 6.5-0.5v8.5q-3-1-6.5 0.5z" fill="#c8c8c8"/><path d="M1 11.5h14" stroke="#c8c8c8" stroke-width="1"/></svg>
<div class="t" style="left:400px;top:214px;">Library</div>
<div class="a" style="left:493px;top:215px;width:0;height:0;border-left:5.0px solid transparent;border-right:5.0px solid transparent;border-top:9px solid #8a8a8a"></div>
<div class="a" style="left:159px;top:245px;width:79px;height:24px;background:#1f1f1f;border-radius:1px"></div>
<div class="t" style="left:173px;top:250px;">Name</div>
<div class="a" style="left:220px;top:252px;width:0;height:0;border-left:5.0px solid transparent;border-right:5.0px solid transparent;border-top:9px solid #8a8a8a"></div>
<div class="a" style="left:246px;top:245px;width:266px;height:24px;background:#c0c0c0;border-radius:3px;border:1px solid #151515"></div>
<div class="a" style="left:159px;top:277px;width:75px;height:24px;background:#1f1f1f;border-radius:4px"></div>
<div class="t" style="left:177px;top:282px;">Search</div>
<div class="a" style="left:145px;top:309px;width:382px;height:107px;background:#262626;border:1px solid #1c1c1c"></div>
<div class="a" style="left:146px;top:310px;width:380px;height:26px;background:#1f1f1f;"></div>
<div class="a" style="left:345px;top:310px;width:1px;height:26px;background:#333;"></div>
<div class="a" style="left:445px;top:310px;width:1px;height:26px;background:#333;"></div>
<div class="t" style="left:150px;top:316px;">Name</div>
<svg class="a" style="left:333px;top:319px;" width="8" height="6" viewBox="0 0 8 6"><path d="M1 5l3-3l3 3" stroke="#7a7a7a" stroke-width="1.2" fill="none"/></svg>
<div class="t" style="left:350px;top:316px;">Kind</div>
<div class="t" style="left:450px;top:316px;">Date Modifie</div>
<div class="a" style="left:146px;top:336px;width:359px;height:24px;background:#6aa8a0;"></div>
<div class="a" style="left:146px;top:360px;width:359px;height:36px;background:#333;"></div>
<svg class="a" style="left:153px;top:340px;" width="14" height="14" viewBox="0 0 14 14"><path d="M2 2l10 6l-10 6z" fill="#9fc9c4"/></svg>
<svg class="a" style="left:174px;top:340px;" width="17" height="16" viewBox="0 0 17 16"><rect x="0.5" y="4.5" width="15.5" height="10.5" fill="#3a3a3a" stroke="#b0b0b0" stroke-width="1"/><path d="M3.5 4.5l1-3.5h5l1 3.5" fill="none" stroke="#b0b0b0" stroke-width="1"/><circle cx="8.3" cy="9.5" r="5" fill="#f02424"/><path d="M5 9q1-2 2 0l0.5 2.5M7.3 9.3q1.2-2 2.3 0l0.4 2.2M9.6 9.3q1.2-1.8 2 0.2" stroke="#fff" stroke-width="1" fill="none"/></svg>
<div class="t" style="left:197px;top:340px;color:#111;">Factory Co...t Library</div>
<svg class="a" style="left:327px;top:340px;" width="14" height="14" viewBox="0 0 14 14"><path d="M11.5 7a4.5 4.5 0 1 1 -1.6-3.5" stroke="#111" stroke-width="1.8" fill="none"/><path d="M8 1.5h4.5v4.5z" fill="#111"/></svg>
<div class="t" style="left:349px;top:341px;color:#111;">Library Folder</div>
<div class="t" style="left:449px;top:341px;color:#111;">2025/4/8</div>
<div class="a" style="left:505px;top:336px;width:21px;height:59px;background:#1f1f1f;"></div>
<div class="a" style="left:507px;top:336px;width:19px;height:19px;background:#262626;"></div>
<div class="a" style="left:507px;top:355px;width:19px;height:19px;background:#2a2a2a;"></div>
<div class="a" style="left:507px;top:375px;width:19px;height:19px;background:#262626;"></div>
<svg class="a" style="left:511px;top:341px;" width="10" height="10" viewBox="0 0 10 10"><path d="M1 8l4-6l4 6z" fill="#6a6a6a"/></svg>
<svg class="a" style="left:511px;top:378px;" width="10" height="10" viewBox="0 0 10 10"><path d="M1 2l4 6l4-6z" fill="#6a6a6a"/></svg>
<div class="a" style="left:146px;top:395px;width:359px;height:20px;background:#1f1f1f;"></div>
<div class="a" style="left:167px;top:396px;width:40px;height:19px;background:#333;"></div>
<div class="a" style="left:146px;top:396px;width:20px;height:19px;background:#262626;"></div>
<div class="a" style="left:487px;top:396px;width:19px;height:19px;background:#262626;"></div>
<svg class="a" style="left:150px;top:400px;" width="10" height="10" viewBox="0 0 10 10"><path d="M8 1l-6 4l6 4z" fill="#6a6a6a"/></svg>
<svg class="a" style="left:491px;top:400px;" width="10" height="10" viewBox="0 0 10 10"><path d="M2 1l6 4l-6 4z" fill="#6a6a6a"/></svg>
<div class="a" style="left:505px;top:395px;width:21px;height:20px;background:#333;"></div>
<div class="t" style="left:151px;top:430px;">Thumbnail size:</div>
<div class="a" style="left:255px;top:434px;width:254px;height:4px;background:#1f1f1f;border-radius:2px;border:1px solid #2a2a2a"></div>
<div class="a" style="left:251px;top:427px;width:20px;height:20px;background:#1f1f1f;border-radius:10px"></div>
<div class="a" style="left:135px;top:458px;width:401px;height:5px;background:#1f1f1f;"></div>
<div class="a" style="left:137px;top:463px;width:380px;height:143px;background:#333;border:1px solid #262626;border-radius:3px"></div>
<div class="a" style="left:517px;top:463px;width:19px;height:142px;background:#1f1f1f;"></div>
<div class="a" style="left:517px;top:464px;width:18px;height:21px;background:#2a2a2a;"></div>
<div class="a" style="left:517px;top:485px;width:18px;height:30px;background:#333;"></div>
<div class="a" style="left:517px;top:584px;width:18px;height:21px;background:#2a2a2a;"></div>
<svg class="a" style="left:521px;top:468px;" width="10" height="10" viewBox="0 0 10 10"><path d="M1 8l4-6l4 6z" fill="#7a7a7a"/></svg>
<svg class="a" style="left:521px;top:590px;" width="10" height="10" viewBox="0 0 10 10"><path d="M1 2l4 6l4-6z" fill="#7a7a7a"/></svg>
<svg class="a" style="left:148px;top:489px;" width="128" height="98" viewBox="0 0 128 98"><path d="M18 11L26 1H48L56 11" fill="none" stroke="#c0c0c0" stroke-width="7" stroke-linejoin="round"/><rect x="4" y="15" width="120" height="79" rx="6" fill="none" stroke="#c0c0c0" stroke-width="7"/><circle cx="63.5" cy="57" r="29" fill="#f02424"/><path d="M42 45q4-4 8 2l4 16M52 50q5-6 10 0l2 12M62 52q6-5 11 2" stroke="#c0c0c0" stroke-width="4" fill="none" stroke-linecap="round"/><circle cx="71" cy="66" r="3.2" fill="#c0c0c0"/></svg>
<div class="t" style="left:283px;top:480px;">Factory Content Library</div>
<div class="t" style="left:283px;top:512px;">Kind:</div>
<div class="t" style="left:347px;top:512px;">Library Folder</div>
<div class="t" style="left:283px;top:537px;">Created:</div>
<div class="t" style="left:347px;top:537px;">2025/4/8 7:02</div>
<div class="t" style="left:283px;top:562px;">Modified:</div>
<div class="t" style="left:347px;top:562px;">2025/4/8 7:02</div>
<div class="a" style="left:144px;top:617px;width:27px;height:26px;background:#1f1f1f;border-radius:3px"></div>
<div class="a" style="left:180px;top:617px;width:27px;height:26px;background:#1f1f1f;border-radius:3px"></div>
<div class="a" style="left:216px;top:617px;width:27px;height:26px;background:#1f1f1f;border-radius:3px"></div>
<div class="a" style="left:252px;top:617px;width:27px;height:26px;background:#1f1f1f;border-radius:3px"></div>
<svg class="a" style="left:144px;top:617px;" width="27" height="26" viewBox="0 0 27 26"><path d="M13.5 6v14M6.5 13h14" stroke="#c0c0c0" stroke-width="3"/></svg>
<svg class="a" style="left:180px;top:617px;" width="27" height="26" viewBox="0 0 27 26"><path d="M11 8h5v6h4l-6.5 6l-6.5-6h4z" fill="#c0c0c0"/></svg>
<svg class="a" style="left:216px;top:617px;" width="27" height="26" viewBox="0 0 27 26"><path d="M5 9h17v12h-17z M5 9v-3h5l1 3" fill="none" stroke="#c0c0c0" stroke-width="1.1"/><path d="M13.5 11.5v7M10 15h7" stroke="#c0c0c0" stroke-width="1.3"/></svg>
<svg class="a" style="left:252px;top:617px;" width="27" height="26" viewBox="0 0 27 26"><path d="M10.5 10h6v8h-6z M9.5 9.5h8M12 8h3" fill="none" stroke="#5a5a5a" stroke-width="1"/></svg>
<div class="t" style="left:287px;top:623px;">More:</div>
<div class="a" style="left:335px;top:617px;width:184px;height:23px;background:#1f1f1f;border-radius:3px"></div>
<div class="t" style="left:397px;top:623px;color:#8a8a8a;">Actions</div>
<div class="a" style="left:500px;top:623px;width:0;height:0;border-left:5.5px solid transparent;border-right:5.5px solid transparent;border-top:10px solid #8a8a8a"></div>
<div class="a" style="left:1194px;top:91px;width:4px;height:615px;background:#1c1c1c;"></div>
<div class="a" style="left:1198px;top:92px;width:242px;height:614px;background:#333;"></div>
<div class="a" style="left:1198px;top:92px;width:242px;height:20px;background:#1f1f1f;"></div>
<div class="t" style="left:1198px;top:96px;width:242px;text-align:center;">Style</div>
<div class="a" style="left:1219px;top:121px;width:96px;height:24px;background:#1f1f1f;border-radius:1px"></div><div class="t" style="left:1219px;top:127px;width:78px;text-align:center;">Shapes</div><div class="a" style="left:1297px;top:128px;width:0;height:0;border-left:5.0px solid transparent;border-right:5.0px solid transparent;border-top:9px solid #8a8a8a"></div>
<div class="a" style="left:1323px;top:121px;width:96px;height:24px;background:#1f1f1f;border-radius:1px"></div><div class="t" style="left:1323px;top:127px;width:78px;text-align:center;">Styles</div><div class="a" style="left:1401px;top:128px;width:0;height:0;border-left:5.0px solid transparent;border-right:5.0px solid transparent;border-top:9px solid #8a8a8a"></div>
<div class="t" style="left:1198px;top:155px;width:242px;text-align:center;font-size:12.5px;">DEFAULTS (For new shapes)</div>
<div class="t" style="left:1206px;top:183px;">Name</div>
<div class="a" style="left:1253px;top:177px;width:164px;height:24px;background:#565656;border-radius:3px"></div>
<div class="a" style="left:1214px;top:205px;width:210px;height:1px;background:#161616;"></div>
<div class="a" style="left:1206px;top:215px;width:16px;height:16px;background:#1f1f1f;"></div><svg class="a" style="left:1206px;top:215px;" width="16" height="16" viewBox="0 0 16 16"><path d="M2.5 7.5L6 13L14 1.5" stroke="#4f8a85" stroke-width="2.2" fill="none"/></svg>
<div class="t" style="left:1226px;top:217px;color:#8c8c8c;">Fill</div>
<div class="a" style="left:1272px;top:211px;width:35px;height:23px;background:#fff;border-radius:4px;border:1px solid #222"></div>
<svg class="a" style="left:1315px;top:214px;" width="18" height="18" viewBox="0 0 18 18"><path d="M2.5 16l8-8" stroke="#c8c8c8" stroke-width="2.8" stroke-linecap="round"/><path d="M2.5 16l8-8" stroke="#333" stroke-width="1" stroke-linecap="round"/><path d="M9 5.5l4 4M12 6l3.5-3.5l1.5 1.5l-3.5 3.5" stroke="#5fb3ad" stroke-width="2.6"/></svg>
<div class="a" style="left:1343px;top:215px;width:16px;height:16px;background:#1f1f1f;"></div>
<div class="t" style="left:1206px;top:245px;">Effect 1</div>
<div class="a" style="left:1271px;top:239px;width:108px;height:24px;background:#1f1f1f;border-radius:2px"></div><div class="t" style="left:1271px;top:244px;width:90px;text-align:center;">&lt;plain&gt;</div><div class="a" style="left:1361px;top:246px;width:0;height:0;border-left:5.0px solid transparent;border-right:5.0px solid transparent;border-top:9px solid #8a8a8a"></div>
<div class="a" style="left:1388px;top:239px;width:32px;height:24px;background:#1f1f1f;border-radius:3px"></div>
<div class="t" style="left:1388px;top:242px;width:32px;text-align:center;">...</div>
<div class="t" style="left:1206px;top:273px;">Effect 2</div>
<div class="a" style="left:1271px;top:267px;width:108px;height:24px;background:#1f1f1f;border-radius:2px"></div><div class="t" style="left:1271px;top:272px;width:90px;text-align:center;">&lt;plain&gt;</div><div class="a" style="left:1361px;top:274px;width:0;height:0;border-left:5.0px solid transparent;border-right:5.0px solid transparent;border-top:9px solid #8a8a8a"></div>
<div class="a" style="left:1388px;top:267px;width:32px;height:24px;background:#1f1f1f;border-radius:3px"></div>
<div class="t" style="left:1388px;top:270px;width:32px;text-align:center;">...</div>
<div class="t" style="left:1206px;top:363px;">Effect</div>
<div class="a" style="left:1271px;top:357px;width:108px;height:24px;background:#1f1f1f;border-radius:2px"></div><div class="t" style="left:1271px;top:362px;width:90px;text-align:center;">&lt;plain&gt;</div><div class="a" style="left:1361px;top:364px;width:0;height:0;border-left:5.0px solid transparent;border-right:5.0px solid transparent;border-top:9px solid #8a8a8a"></div>
<div class="a" style="left:1388px;top:357px;width:32px;height:24px;background:#1f1f1f;border-radius:3px"></div>
<div class="t" style="left:1388px;top:360px;width:32px;text-align:center;">...</div>
<div class="a" style="left:1214px;top:295px;width:210px;height:1px;background:#161616;"></div>
<div class="a" style="left:1206px;top:306px;width:16px;height:16px;background:#1f1f1f;"></div><svg class="a" style="left:1206px;top:306px;" width="16" height="16" viewBox="0 0 16 16"><path d="M2.5 7.5L6 13L14 1.5" stroke="#4f8a85" stroke-width="2.2" fill="none"/></svg>
<div class="t" style="left:1226px;top:308px;color:#8c8c8c;">Stroke</div>
<div class="a" style="left:1276px;top:301px;width:37px;height:23px;background:#000;border-radius:4px;border:1px solid #1a1a1a"></div>
<svg class="a" style="left:1320px;top:304px;" width="18" height="18" viewBox="0 0 18 18"><path d="M2.5 16l8-8" stroke="#c8c8c8" stroke-width="2.8" stroke-linecap="round"/><path d="M2.5 16l8-8" stroke="#333" stroke-width="1" stroke-linecap="round"/><path d="M9 5.5l4 4M12 6l3.5-3.5l1.5 1.5l-3.5 3.5" stroke="#5fb3ad" stroke-width="2.6"/></svg>
<div class="a" style="left:1348px;top:305px;width:16px;height:16px;background:#1f1f1f;"></div>
<div class="a" style="left:1380px;top:301px;width:52px;height:51px;background:#c0c0c0;border:1px solid #d8d8d8"></div>
<div class="t" style="left:1380px;top:313px;width:52px;text-align:center;color:#111;">No</div>
<div class="t" style="left:1380px;top:330px;width:52px;text-align:center;color:#111;">Brush</div>
<div class="t" style="left:1206px;top:335px;">Width</div>
<div class="a" style="left:1276px;top:329px;width:64px;height:24px;background:#1f1f1f;border-radius:3px"></div>
<div class="t" style="left:1280px;top:335px;color:#5fb3ad;">4 px</div>
<div class="a" style="left:1348px;top:333px;width:16px;height:16px;background:#1f1f1f;"></div>
<div class="a" style="left:1206px;top:389px;width:16px;height:16px;background:#1f1f1f;"></div><svg class="a" style="left:1206px;top:389px;" width="16" height="16" viewBox="0 0 16 16"><path d="M2.5 7.5L6 13L14 1.5" stroke="#5fb3ad" stroke-width="2.2" fill="none"/></svg>
<div class="t" style="left:1226px;top:391px;">Round caps</div>
<div class="a" style="left:1214px;top:413px;width:210px;height:1px;background:#161616;"></div>
<div class="t" style="left:1206px;top:426px;">Style 1</div>
<div class="a" style="left:1274px;top:419px;width:128px;height:24px;background:#1f1f1f;border-radius:1px"></div><div class="t" style="left:1274px;top:425px;width:110px;text-align:center;">&lt;None&gt;</div><div class="a" style="left:1384px;top:426px;width:0;height:0;border-left:5.0px solid transparent;border-right:5.0px solid transparent;border-top:9px solid #8a8a8a"></div>
<div class="t" style="left:1206px;top:454px;">Style 2</div>
<div class="a" style="left:1274px;top:447px;width:128px;height:24px;background:#1f1f1f;border-radius:1px"></div><div class="t" style="left:1274px;top:453px;width:110px;text-align:center;">&lt;None&gt;</div><div class="a" style="left:1384px;top:454px;width:0;height:0;border-left:5.0px solid transparent;border-right:5.0px solid transparent;border-top:9px solid #8a8a8a"></div>
<div class="t" style="left:1206px;top:482px;">Thickness</div>
<div class="a" style="left:1274px;top:475px;width:61px;height:24px;background:#565656;border-radius:3px"></div>
<div class="t" style="left:1206px;top:510px;">Swatches</div>
<div class="a" style="left:1274px;top:503px;width:128px;height:24px;background:#1f1f1f;border-radius:1px"></div><div class="t" style="left:1282px;top:509px;">Basic Colors.p...</div><div class="a" style="left:1384px;top:510px;width:0;height:0;border-left:5.0px solid transparent;border-right:5.0px solid transparent;border-top:9px solid #8a8a8a"></div>
<div class="a" style="left:1230px;top:530px;width:178px;height:112px;background:#111;"></div>
<svg class="a" style="left:0;top:0" width="1448" height="991" shape-rendering="crispEdges"><rect x="1232" y="532" width="10" height="10" fill="#ff0000"/><rect x="1242" y="532" width="11" height="10" fill="#ffff00"/><rect x="1253" y="532" width="11" height="10" fill="#00ff00"/><rect x="1264" y="532" width="11" height="10" fill="#00ffff"/><rect x="1275" y="532" width="11" height="10" fill="#0000ff"/><rect x="1286" y="532" width="11" height="10" fill="#ff00ff"/><rect x="1297" y="532" width="11" height="10" fill="#ffffff"/><rect x="1308" y="532" width="11" height="10" fill="#ebebeb"/><rect x="1319" y="532" width="11" height="10" fill="#dcdcdc"/><rect x="1330" y="532" width="11" height="10" fill="#d4d4d4"/><rect x="1341" y="532" width="11" height="10" fill="#c8c8c8"/><rect x="1352" y="532" width="11" height="10" fill="#bebebe"/><rect x="1363" y="532" width="11" height="10" fill="#b4b4b4"/><rect x="1374" y="532" width="11" height="10" fill="#aaaaaa"/><rect x="1385" y="532" width="11" height="10" fill="#a0a0a0"/><rect x="1396" y="532" width="10" height="10" fill="#919191"/><rect x="1232" y="542" width="10" height="11" fill="#dc0030"/><rect x="1242" y="542" width="11" height="11" fill="#f8ec00"/><rect x="1253" y="542" width="11" height="11" fill="#00963c"/><rect x="1264" y="542" width="11" height="11" fill="#00a0e8"/><rect x="1275" y="542" width="11" height="11" fill="#3c0a78"/><rect x="1286" y="542" width="11" height="11" fill="#e0007a"/><rect x="1297" y="542" width="11" height="11" fill="#878787"/><rect x="1308" y="542" width="11" height="11" fill="#7a7a7a"/><rect x="1319" y="542" width="11" height="11" fill="#6e6e6e"/><rect x="1330" y="542" width="11" height="11" fill="#616161"/><rect x="1341" y="542" width="11" height="11" fill="#555555"/><rect x="1352" y="542" width="11" height="11" fill="#454545"/><rect x="1363" y="542" width="11" height="11" fill="#383838"/><rect x="1374" y="542" width="11" height="11" fill="#262626"/><rect x="1385" y="542" width="11" height="11" fill="#0f100f"/><rect x="1396" y="542" width="10" height="11" fill="#000000"/><rect x="1232" y="553" width="10" height="11" fill="#f39c7a"/><rect x="1242" y="553" width="11" height="11" fill="#f6b27e"/><rect x="1253" y="553" width="11" height="11" fill="#fac88c"/><rect x="1264" y="553" width="11" height="11" fill="#fff59a"/><rect x="1275" y="553" width="11" height="11" fill="#cde19f"/><rect x="1286" y="553" width="11" height="11" fill="#a9d49d"/><rect x="1297" y="553" width="11" height="11" fill="#8dc9a0"/><rect x="1308" y="553" width="11" height="11" fill="#93cdcd"/><rect x="1319" y="553" width="11" height="11" fill="#8ecdf1"/><rect x="1330" y="553" width="11" height="11" fill="#90a8d8"/><rect x="1341" y="553" width="11" height="11" fill="#9696c8"/><rect x="1352" y="553" width="11" height="11" fill="#9e82bc"/><rect x="1363" y="553" width="11" height="11" fill="#b088bc"/><rect x="1374" y="553" width="11" height="11" fill="#c890bf"/><rect x="1385" y="553" width="11" height="11" fill="#f4a0bc"/><rect x="1396" y="553" width="10" height="11" fill="#f4a09c"/><rect x="1232" y="564" width="10" height="11" fill="#ec6a50"/><rect x="1242" y="564" width="11" height="11" fill="#f29458"/><rect x="1253" y="564" width="11" height="11" fill="#f4b65e"/><rect x="1264" y="564" width="11" height="11" fill="#fff06a"/><rect x="1275" y="564" width="11" height="11" fill="#acd470"/><rect x="1286" y="564" width="11" height="11" fill="#7ec47a"/><rect x="1297" y="564" width="11" height="11" fill="#35b07a"/><rect x="1308" y="564" width="11" height="11" fill="#45b4b8"/><rect x="1319" y="564" width="11" height="11" fill="#3eb8ec"/><rect x="1330" y="564" width="11" height="11" fill="#5e8cc6"/><rect x="1341" y="564" width="11" height="11" fill="#6670b0"/><rect x="1352" y="564" width="11" height="11" fill="#704c9c"/><rect x="1363" y="564" width="11" height="11" fill="#905a9e"/><rect x="1374" y="564" width="11" height="11" fill="#ae5c9c"/><rect x="1385" y="564" width="11" height="11" fill="#ec6a9c"/><rect x="1396" y="564" width="10" height="11" fill="#ec6a78"/><rect x="1232" y="575" width="10" height="11" fill="#dc002a"/><rect x="1242" y="575" width="11" height="11" fill="#e8621c"/><rect x="1253" y="575" width="11" height="11" fill="#f09c00"/><rect x="1264" y="575" width="11" height="11" fill="#f8f000"/><rect x="1275" y="575" width="11" height="11" fill="#7ec428"/><rect x="1286" y="575" width="11" height="11" fill="#00ac38"/><rect x="1297" y="575" width="11" height="11" fill="#009a44"/><rect x="1308" y="575" width="11" height="11" fill="#00a0a0"/><rect x="1319" y="575" width="11" height="11" fill="#00a8e8"/><rect x="1330" y="575" width="11" height="11" fill="#0a68b4"/><rect x="1341" y="575" width="11" height="11" fill="#304a98"/><rect x="1352" y="575" width="11" height="11" fill="#3c0a7c"/><rect x="1363" y="575" width="11" height="11" fill="#680878"/><rect x="1374" y="575" width="11" height="11" fill="#8c007c"/><rect x="1385" y="575" width="11" height="11" fill="#e00078"/><rect x="1396" y="575" width="10" height="11" fill="#e0004c"/><rect x="1232" y="586" width="10" height="11" fill="#9e0a22"/><rect x="1242" y="586" width="11" height="11" fill="#9c4016"/><rect x="1253" y="586" width="11" height="11" fill="#a06808"/><rect x="1264" y="586" width="11" height="11" fill="#a8a000"/><rect x="1275" y="586" width="11" height="11" fill="#4e8218"/><rect x="1286" y="586" width="11" height="11" fill="#00741e"/><rect x="1297" y="586" width="11" height="11" fill="#006428"/><rect x="1308" y="586" width="11" height="11" fill="#006a6a"/><rect x="1319" y="586" width="11" height="11" fill="#0070a4"/><rect x="1330" y="586" width="11" height="11" fill="#003f78"/><rect x="1341" y="586" width="11" height="11" fill="#1e2a64"/><rect x="1352" y="586" width="11" height="11" fill="#20064e"/><rect x="1363" y="586" width="11" height="11" fill="#420050"/><rect x="1374" y="586" width="11" height="11" fill="#5c004e"/><rect x="1385" y="586" width="11" height="11" fill="#960048"/><rect x="1396" y="586" width="10" height="11" fill="#9c0030"/><rect x="1232" y="597" width="10" height="11" fill="#6a0010"/><rect x="1242" y="597" width="11" height="11" fill="#702c00"/><rect x="1253" y="597" width="11" height="11" fill="#744800"/><rect x="1264" y="597" width="11" height="11" fill="#7a7800"/><rect x="1275" y="597" width="11" height="11" fill="#3a5a0a"/><rect x="1286" y="597" width="11" height="11" fill="#005210"/><rect x="1297" y="597" width="11" height="11" fill="#004a18"/><rect x="1308" y="597" width="11" height="11" fill="#004a48"/><rect x="1319" y="597" width="11" height="11" fill="#004e78"/><rect x="1330" y="597" width="11" height="11" fill="#002e56"/><rect x="1341" y="597" width="11" height="11" fill="#131c44"/><rect x="1352" y="597" width="11" height="11" fill="#1a0034"/><rect x="1363" y="597" width="11" height="11" fill="#2e0030"/><rect x="1374" y="597" width="11" height="11" fill="#410034"/><rect x="1385" y="597" width="11" height="11" fill="#6a0032"/><rect x="1396" y="597" width="10" height="11" fill="#6a0020"/><rect x="1232" y="608" width="10" height="11" fill="#c8b898"/><rect x="1242" y="608" width="11" height="11" fill="#a08c7a"/><rect x="1253" y="608" width="11" height="11" fill="#7a6858"/><rect x="1264" y="608" width="11" height="11" fill="#564540"/><rect x="1275" y="608" width="11" height="11" fill="#362a2a"/><rect x="1286" y="608" width="11" height="11" fill="#c8a070"/><rect x="1297" y="608" width="11" height="11" fill="#a88454"/><rect x="1308" y="608" width="11" height="11" fill="#8c6838"/><rect x="1319" y="608" width="11" height="11" fill="#705020"/><rect x="1330" y="608" width="11" height="11" fill="#553412"/><rect x="1341" y="608" width="11" height="11" fill="#ffffff"/><rect x="1352" y="608" width="11" height="11" fill="#ffffd8"/><rect x="1363" y="608" width="11" height="11" fill="#ffff90"/><rect x="1374" y="608" width="11" height="11" fill="#ffff50"/><rect x="1385" y="608" width="11" height="11" fill="#ffff00"/><rect x="1396" y="608" width="10" height="11" fill="#ffff00"/><rect x="1232" y="619" width="10" height="11" fill="#ffe030"/><rect x="1242" y="619" width="11" height="11" fill="#ffd0ff"/><rect x="1253" y="619" width="11" height="11" fill="#ffcccc"/><rect x="1264" y="619" width="11" height="11" fill="#ffc890"/><rect x="1275" y="619" width="11" height="11" fill="#ffcc60"/><rect x="1286" y="619" width="11" height="11" fill="#ffcc10"/><rect x="1297" y="619" width="11" height="11" fill="#ffc800"/><rect x="1308" y="619" width="11" height="11" fill="#ffb000"/><rect x="1319" y="619" width="11" height="11" fill="#ffa0ff"/><rect x="1330" y="619" width="11" height="11" fill="#ff98d0"/><rect x="1341" y="619" width="11" height="11" fill="#ff9898"/><rect x="1352" y="619" width="11" height="11" fill="#ff9860"/><rect x="1363" y="619" width="11" height="11" fill="#ff9820"/><rect x="1374" y="619" width="11" height="11" fill="#ff9800"/><rect x="1385" y="619" width="11" height="11" fill="#ff60ff"/><rect x="1396" y="619" width="10" height="11" fill="#ff60c8"/><rect x="1232" y="630" width="10" height="10" fill="#ff60a0"/><rect x="1242" y="630" width="11" height="10" fill="#ff6060"/><rect x="1253" y="630" width="11" height="10" fill="#ff6428"/><rect x="1264" y="630" width="11" height="10" fill="#ff6400"/><rect x="1275" y="630" width="11" height="10" fill="#ff30d0"/><rect x="1286" y="630" width="11" height="10" fill="#ff3098"/><rect x="1297" y="630" width="11" height="10" fill="#ff3064"/><rect x="1308" y="630" width="11" height="10" fill="#ff3030"/><rect x="1319" y="630" width="11" height="10" fill="#ff3200"/><rect x="1330" y="630" width="11" height="10" fill="#ff00ff"/><rect x="1341" y="630" width="11" height="10" fill="#ff00c8"/><rect x="1352" y="630" width="11" height="10" fill="#ff0096"/><rect x="1363" y="630" width="11" height="10" fill="#ff0064"/><rect x="1374" y="630" width="11" height="10" fill="#ff0032"/><rect x="1385" y="630" width="11" height="10" fill="#ff0000"/><rect x="1396" y="630" width="10" height="10" fill="#f6f6f6"/></svg>
<div class="a" style="left:1228px;top:646px;width:54px;height:24px;background:#1f1f1f;border-radius:3px"></div>
<div class="t" style="left:1228px;top:652px;width:54px;text-align:center;">Copy</div>
<div class="a" style="left:1291px;top:646px;width:54px;height:24px;background:#262626;border-radius:3px"></div>
<div class="t" style="left:1291px;top:652px;width:54px;text-align:center;color:#6e6e6e;">Paste</div>
<div class="a" style="left:1353px;top:646px;width:56px;height:24px;background:#1f1f1f;border-radius:3px"></div>
<div class="t" style="left:1353px;top:652px;width:56px;text-align:center;">Reset</div>
<div class="a" style="left:1206px;top:678px;width:16px;height:16px;background:#1f1f1f;"></div><svg class="a" style="left:1206px;top:678px;" width="16" height="16" viewBox="0 0 16 16"><path d="M2.5 7.5L6 13L14 1.5" stroke="#5fb3ad" stroke-width="2.2" fill="none"/></svg>
<div class="t" style="left:1226px;top:680px;">Advanced</div>
<div class="a" style="left:1295px;top:678px;width:16px;height:16px;background:#1f1f1f;"></div><svg class="a" style="left:1295px;top:678px;" width="16" height="16" viewBox="0 0 16 16"><path d="M2.5 7.5L6 13L14 1.5" stroke="#5fb3ad" stroke-width="2.2" fill="none"/></svg>
<div class="t" style="left:1315px;top:680px;">Checker selection</div>
<div class="a" style="left:8px;top:700px;width:1190px;height:263px;background:#333;"></div>
<div class="a" style="left:8px;top:698px;width:101px;height:2px;background:#1c1c1c;"></div>
<div class="a" style="left:110px;top:727px;width:1082px;height:5px;background:#1f1f1f;"></div>
<div class="a" style="left:431px;top:705px;width:23px;height:17px;background:#262626;border-radius:3px;"></div>
<div class="a" style="left:456px;top:705px;width:23px;height:17px;background:#262626;border-radius:3px;"></div>
<div class="a" style="left:481px;top:705px;width:23px;height:17px;background:#262626;border-radius:3px;"></div>
<div class="a" style="left:506px;top:705px;width:22px;height:17px;background:#1f1f1f;border-radius:3px;"></div>
<div class="a" style="left:530px;top:705px;width:23px;height:17px;background:#1f1f1f;border-radius:3px;"></div>
<div class="a" style="left:555px;top:705px;width:23px;height:17px;background:#1f1f1f;border-radius:3px;"></div>
<div class="a" style="left:580px;top:705px;width:24px;height:17px;background:#1f1f1f;border-radius:3px;"></div>
<div class="t" style="left:614px;top:708px;">Frame</div>
<div class="a" style="left:655px;top:702px;width:81px;height:24px;background:#1f1f1f;border-radius:3px;"></div>
<div class="t" style="left:658px;top:708px;color:#5fb3ad;">0</div>
<div class="t" style="left:740px;top:708px;">of</div>
<div class="a" style="left:757px;top:702px;width:81px;height:24px;background:#1f1f1f;border-radius:3px;"></div>
<div class="t" style="left:760px;top:708px;color:#5fb3ad;">206</div>
<div class="a" style="left:848px;top:705px;width:23px;height:17px;background:#1f1f1f;border-radius:3px;"></div>
<div class="a" style="left:900px;top:705px;width:17px;height:17px;background:#1f1f1f;border-radius:2px;"></div>
<div class="a" style="left:998px;top:704px;width:18px;height:18px;background:#3a4846;border-radius:3px;border:1px solid #5fb3ad"></div>
<div class="a" style="left:1020px;top:704px;width:18px;height:18px;background:#1f1f1f;border-radius:3px;"></div>
<div class="a" style="left:1042px;top:704px;width:18px;height:18px;background:#1f1f1f;border-radius:3px;"></div>
<div class="a" style="left:1064px;top:704px;width:18px;height:18px;background:#3a4846;border-radius:3px;border:1px solid #5fb3ad"></div>
<div class="a" style="left:1086px;top:704px;width:18px;height:18px;background:#3a4846;border-radius:3px;border:1px solid #5fb3ad"></div>
<div class="a" style="left:1109px;top:702px;width:83px;height:24px;background:#1f1f1f;border-radius:5px"></div><div class="t" style="left:1121px;top:708px;">Display</div><div class="a" style="left:1174px;top:709px;width:0;height:0;border-left:5.0px solid transparent;border-right:5.0px solid transparent;border-top:9px solid #8a8a8a"></div>
<div class="a" style="left:48px;top:732px;width:2px;height:231px;background:#1c1c1c;"></div>
<div class="a" style="left:54px;top:735px;width:24px;height:18px;background:#1f1f1f;border-radius:4px;"></div>
<div class="t" style="left:56px;top:738px;color:#c8c8c8;font-size:14px;">0</div>
<div class="a" style="left:87px;top:735px;width:35px;height:18px;background:#3a4846;border-radius:4px;border:1px solid #5fb3ad"></div>
<div class="a" style="left:125px;top:735px;width:32px;height:18px;background:#1f1f1f;border-radius:3px;"></div>
<div class="a" style="left:159px;top:735px;width:35px;height:18px;background:#1f1f1f;border-radius:3px;"></div>
<div class="a" style="left:203px;top:735px;width:23px;height:18px;background:#262626;border-radius:4px;"></div>
<div class="a" style="left:229px;top:733px;width:109px;height:22px;background:#1f1f1f;border-radius:4px"></div><div class="t" style="left:241px;top:738px;color:#8c8c8c;">Onion Skins</div><div class="a" style="left:320px;top:739px;width:0;height:0;border-left:5.0px solid transparent;border-right:5.0px solid transparent;border-top:9px solid #8a8a8a"></div>
<div class="a" style="left:348px;top:735px;width:23px;height:18px;background:#1f1f1f;border-radius:3px;"></div>
<div class="a" style="left:373px;top:735px;width:23px;height:18px;background:#1f1f1f;border-radius:3px;"></div>
<div class="a" style="left:406px;top:735px;width:24px;height:18px;background:#1f1f1f;border-radius:3px;"></div>
<div class="a" style="left:432px;top:735px;width:23px;height:18px;background:#1f1f1f;border-radius:3px;"></div>
<div class="a" style="left:464px;top:732px;width:100px;height:24px;background:#1f1f1f;border-radius:1px"></div><div class="t" style="left:484px;top:738px;">Smooth</div><div class="a" style="left:546px;top:739px;width:0;height:0;border-left:5.0px solid transparent;border-right:5.0px solid transparent;border-top:9px solid #8a8a8a"></div>
<div class="a" style="left:565px;top:732px;width:40px;height:24px;background:#1f1f1f;border-radius:1px"></div><div class="t" style="left:574px;top:738px;">1</div><div class="a" style="left:586px;top:739px;width:0;height:0;border-left:5.0px solid transparent;border-right:5.0px solid transparent;border-top:9px solid #8a8a8a"></div>
<div class="a" style="left:607px;top:735px;width:22px;height:18px;background:#1f1f1f;border-radius:2px;"></div>
<div class="a" style="left:639px;top:735px;width:23px;height:18px;background:#1f1f1f;border-radius:4px;"></div>
<div class="a" style="left:664px;top:735px;width:24px;height:18px;background:#1f1f1f;border-radius:4px;"></div>
<div class="a" style="left:689px;top:733px;width:37px;height:22px;background:#1f1f1f;border-radius:3px;"></div>
<div class="t" style="left:692px;top:738px;color:#5fb3ad;">2</div>
<div class="a" style="left:735px;top:735px;width:24px;height:18px;background:#1f1f1f;border-radius:4px;"></div>
<div class="a" style="left:768px;top:735px;width:23px;height:18px;background:#1f1f1f;border-radius:4px;"></div>
<div class="a" style="left:794px;top:735px;width:21px;height:18px;background:#1f1f1f;border-radius:4px;"></div>
<div class="a" style="left:818px;top:735px;width:23px;height:18px;background:#1f1f1f;border-radius:4px;"></div>
<div class="a" style="left:1096px;top:733px;width:40px;height:23px;background:#1f1f1f;"></div>
<div class="a" style="left:1118px;top:740px;width:0;height:0;border-left:5.0px solid transparent;border-right:5.0px solid transparent;border-top:9px solid #8a8a8a"></div>
<div class="a" style="left:1138px;top:735px;width:24px;height:18px;background:#1f1f1f;border-radius:4px;"></div>
<div class="a" style="left:1164px;top:735px;width:24px;height:18px;background:#1f1f1f;border-radius:4px;"></div>
<div class="a" style="left:50px;top:756px;width:1122px;height:20px;background:#262626;"></div>
<div class="a" style="left:66px;top:758px;width:1106px;height:17px;background:#4a6964;"></div>
<div class="t" style="left:38px;top:759px;width:40px;text-align:center;color:#8ab8c0;">0</div>
<div class="t" style="left:86px;top:759px;width:40px;text-align:center;color:#d4d0cc;">6</div>
<div class="t" style="left:134px;top:759px;width:40px;text-align:center;color:#d4d0cc;">12</div>
<div class="t" style="left:182px;top:759px;width:40px;text-align:center;color:#d4d0cc;">18</div>
<div class="t" style="left:230px;top:759px;width:40px;text-align:center;color:#d4d0cc;">24</div>
<div class="t" style="left:278px;top:759px;width:40px;text-align:center;color:#d4d0cc;">30</div>
<div class="t" style="left:326px;top:759px;width:40px;text-align:center;color:#d4d0cc;">36</div>
<div class="t" style="left:374px;top:759px;width:40px;text-align:center;color:#d4d0cc;">42</div>
<div class="t" style="left:422px;top:759px;width:40px;text-align:center;color:#d4d0cc;">48</div>
<div class="t" style="left:470px;top:759px;width:40px;text-align:center;color:#d4d0cc;">54</div>
<div class="t" style="left:518px;top:759px;width:40px;text-align:center;color:#d4d0cc;">60</div>
<div class="t" style="left:566px;top:759px;width:40px;text-align:center;color:#d4d0cc;">66</div>
<div class="t" style="left:614px;top:759px;width:40px;text-align:center;color:#d4d0cc;">72</div>
<div class="t" style="left:662px;top:759px;width:40px;text-align:center;color:#d4d0cc;">78</div>
<div class="t" style="left:710px;top:759px;width:40px;text-align:center;color:#d4d0cc;">84</div>
<div class="t" style="left:758px;top:759px;width:40px;text-align:center;color:#d4d0cc;">90</div>
<div class="t" style="left:806px;top:759px;width:40px;text-align:center;color:#d4d0cc;">96</div>
<div class="t" style="left:854px;top:759px;width:40px;text-align:center;color:#d4d0cc;">102</div>
<div class="t" style="left:902px;top:759px;width:40px;text-align:center;color:#d4d0cc;">108</div>
<div class="t" style="left:950px;top:759px;width:40px;text-align:center;color:#d4d0cc;">114</div>
<div class="t" style="left:998px;top:759px;width:40px;text-align:center;color:#d4d0cc;">120</div>
<div class="t" style="left:1046px;top:759px;width:40px;text-align:center;color:#d4d0cc;">126</div>
<div class="t" style="left:1094px;top:759px;width:40px;text-align:center;color:#d4d0cc;">132</div>
<div class="t" style="left:1142px;top:759px;width:40px;text-align:center;color:#d4d0cc;">138</div>
<div class="a" style="left:50px;top:775px;width:1122px;height:17px;background:#1f1f1f;"></div>
<div class="a" style="left:50px;top:792px;width:1122px;height:150px;background:#333;"></div>
<div class="t" style="left:48px;top:794px;width:20px;text-align:center;color:#8ab8c0;">0</div>
<div class="t" style="left:240px;top:794px;width:20px;text-align:center;color:#a8a8a8;">1</div>
<div class="t" style="left:432px;top:794px;width:20px;text-align:center;color:#a8a8a8;">2</div>
<div class="t" style="left:624px;top:794px;width:20px;text-align:center;color:#a8a8a8;">3</div>
<div class="t" style="left:816px;top:794px;width:20px;text-align:center;color:#a8a8a8;">4</div>
<div class="t" style="left:1008px;top:794px;width:20px;text-align:center;color:#a8a8a8;">5</div>
<div class="a" style="left:1172px;top:757px;width:20px;height:185px;background:#1f1f1f;"></div>
<div class="a" style="left:1173px;top:757px;width:19px;height:20px;background:#2e2e2e;border-radius:3px"></div>
<div class="a" style="left:1173px;top:921px;width:19px;height:20px;background:#2e2e2e;border-radius:3px"></div>
<div class="a" style="left:50px;top:942px;width:1142px;height:21px;background:#1f1f1f;"></div>
<div class="a" style="left:71px;top:943px;width:40px;height:19px;background:#333;"></div>
<div class="a" style="left:1172px;top:942px;width:20px;height:21px;background:#333;"></div>
<svg class="a" style="left:0px;top:0px;pointer-events:none" width="1448" height="991" viewBox="0 0 1448 991"><circle cx="437.5" cy="713.5" r="3.5" fill="none" stroke="#5a5a5a" stroke-width="1.1"/><path d="M449.5 709l-6 4.5l6 4.5z" fill="none" stroke="#5a5a5a" stroke-width="1.1"/><path d="M461.5 709.5v8.5h2.5v-8.5z" fill="none" stroke="#5a5a5a" stroke-width="1.1"/><path d="M474 709l-6 4.5l6 4.5z" fill="none" stroke="#5a5a5a" stroke-width="1.1"/><path d="M492 709l-6 4.5l6 4.5zM498 709l-6 4.5l6 4.5z" fill="none" stroke="#5a5a5a" stroke-width="1.1"/><path d="M513.5 708.5l7.5 5l-7.5 5z" fill="none" stroke="#c8c8c8" stroke-width="1.2"/><path d="M534.5 708.5l6.5 5l-6.5 5zM541 708.5l6.5 5l-6.5 5z" fill="none" stroke="#c8c8c8" stroke-width="1.2"/><path d="M559.5 708.5l6.5 5l-6.5 5z" fill="none" stroke="#c8c8c8" stroke-width="1.2"/><path d="M568.5 709v9h3v-9z" fill="none" stroke="#c8c8c8" stroke-width="1.2"/><path d="M583.5 708.5l6.5 5l-6.5 5z" fill="none" stroke="#c8c8c8" stroke-width="1.2"/><circle cx="596" cy="713.5" r="4" fill="none" stroke="#c8c8c8" stroke-width="1.2"/><path d="M853.5 711h2.5l4-3.5v12l-4-3.5h-2.5z" fill="none" stroke="#c8c8c8" stroke-width="1.1"/><path d="M862.5 710.5q1.5 3 0 6M865 709q2.5 4.5 0 9" fill="none" stroke="#c8c8c8" stroke-width="1.1"/><rect x="901.5" y="708.5" width="14" height="10" fill="none" stroke="#c8c8c8" stroke-width="1.2"/><path d="M904 713.5h9M904 713.5l2-1.8M904 713.5l2 1.8M913 713.5l-2-1.8M913 713.5l-2 1.8" stroke="#c8c8c8" stroke-width="1.1" fill="none"/><rect x="922.5" y="706.5" width="14" height="14" fill="#262626" stroke="#5fb3ad" stroke-width="1"/><rect x="939" y="706" width="15" height="15" fill="#b8b8b8"/><path d="M946.5 706v15" stroke="#333" stroke-width="1.5"/><rect x="940.5" y="707.5" width="12" height="12" fill="none" stroke="#888" stroke-width="0.7"/><rect x="956" y="706" width="15" height="15" fill="#b8b8b8"/><path d="M956 713.5h15" stroke="#333" stroke-width="1.5"/><rect x="973" y="706" width="15" height="15" fill="#b8b8b8"/><path d="M980.5 706v15M973 713.5h15" stroke="#333" stroke-width="1.5"/><path d="M1001.5 719q0-11 5.5-11t5.5 11" fill="none" stroke="#c8c8c8" stroke-width="1.2"/><circle cx="1001.5" cy="718.5" r="1.6" fill="#c8c8c8"/><circle cx="1012.5" cy="718.5" r="1.6" fill="#c8c8c8"/><ellipse cx="1029" cy="713" rx="7" ry="6.5" fill="none" stroke="#c8c8c8" stroke-width="1.3"/><text x="1029" y="716.5" font-size="8" font-weight="bold" font-family="Liberation Sans" fill="#c8c8c8" text-anchor="middle">FX</text><rect x="1044.5" y="706.5" width="13" height="13" fill="#111" stroke="#c8c8c8" stroke-width="1.1"/><text x="1051" y="716.5" font-size="8" font-weight="bold" font-family="Liberation Sans" fill="#c8c8c8" text-anchor="middle">FX</text><path d="M1066.5 710.5q4.5-2 7 1q2.5-3 7-1q0 5-3.5 6q-2 0-3.5-2q-1.5 2-3.5 2q-3.5-1-3.5-6z" fill="#c8c8c8"/><ellipse cx="1070" cy="712.5" rx="1.5" ry="1" fill="#333"/><ellipse cx="1077" cy="712.5" rx="1.5" ry="1" fill="#333"/><path d="M1089 719.5q1-3 3-4l9-8.5" stroke="#c8c8c8" stroke-width="1.6" fill="none"/><path d="M1088.5 720q0-3 2-4.5q2 0 2.5 2q-1 2.5-4.5 2.5z" fill="#c8c8c8"/><path d="M65 741h9M71 738.5l3 2.5l-3 2.5M75 747h-9M68 744.5l-3 2.5l3 2.5" stroke="#c8c8c8" stroke-width="1.3" fill="none"/><circle cx="94" cy="745" r="3.6" fill="#c8c8c8"/><circle cx="115" cy="745" r="3.6" fill="#c8c8c8"/><path d="M94 745h21" stroke="#c8c8c8" stroke-width="1.3"/><rect x="128" y="737" width="16" height="8" fill="#c8c8c8"/><rect x="136.5" y="745.5" width="17" height="6" fill="none" stroke="#c8c8c8" stroke-width="1.2"/><circle cx="164.5" cy="740" r="3.2" fill="#c8c8c8"/><circle cx="187.5" cy="748.5" r="3.6" fill="#c8c8c8"/><path d="M164.5 740q4 0 8 4t8 4.5h7" stroke="#c8c8c8" stroke-width="1.3" fill="none"/><circle cx="212" cy="746" r="5" fill="none" stroke="#555" stroke-width="1.1"/><circle cx="214" cy="745" r="5" fill="none" stroke="#888" stroke-width="1.1"/><circle cx="216.5" cy="743.5" r="5" fill="none" stroke="#5fb3ad" stroke-width="1.4"/><circle cx="353.5" cy="739" r="1.9" fill="#c8c8c8"/><circle cx="353.5" cy="749" r="1.9" fill="#5fb3ad"/><path d="M351.5 742.5l2 2.5l2-2.5" stroke="#5fb3ad" stroke-width="0.9" fill="none"/><circle cx="360.0" cy="739" r="1.9" fill="#c8c8c8"/><circle cx="360.0" cy="749" r="1.9" fill="#5fb3ad"/><path d="M358.0 742.5l2 2.5l2-2.5" stroke="#5fb3ad" stroke-width="0.9" fill="none"/><circle cx="366.5" cy="739" r="1.9" fill="#c8c8c8"/><circle cx="366.5" cy="749" r="1.9" fill="#5fb3ad"/><path d="M364.5 742.5l2 2.5l2-2.5" stroke="#5fb3ad" stroke-width="0.9" fill="none"/><circle cx="379.5" cy="748" r="3.2" fill="none" stroke="#c8c8c8" stroke-width="1.6"/><path d="M382.5 748h9M388.5 748v2.5M391 748v2.5" stroke="#c8c8c8" stroke-width="1.6"/><text x="388" y="744" font-size="9" font-family="Liberation Sans" fill="#c8c8c8" text-anchor="middle">A</text><circle cx="413" cy="745" r="3.4" fill="none" stroke="#c8c8c8" stroke-width="1.7"/><path d="M416 743.5l10-2.5M421 742l1 3M424.5 741l1 3" stroke="#c8c8c8" stroke-width="1.7"/><path d="M437 745a6 6 0 1 0 2.5-4.8" stroke="#c8c8c8" stroke-width="1.3" fill="none"/><path d="M436 738.5l4.5 1l-2.5 3z" fill="#c8c8c8"/><text x="443.3" y="748.5" font-size="8.5" font-family="Liberation Sans" fill="#c8c8c8" text-anchor="middle">R</text><rect x="609.5" y="737.5" width="17" height="14" fill="none" stroke="#c8c8c8" stroke-width="1.2"/><path d="M609.5 740h17" stroke="#c8c8c8" stroke-width="1"/><text x="618" y="749.5" font-size="9" font-family="Liberation Sans" fill="#c8c8c8" text-anchor="middle">K</text><circle cx="645.5" cy="744.3" r="3.4" fill="#c8c8c8"/><path d="M651 744.3h9M654 741.3l-3 3l3 3" stroke="#5fb3ad" stroke-width="1.5" fill="none"/><circle cx="681.5" cy="744.3" r="3.4" fill="#c8c8c8"/><path d="M667 744.3h9M673 741.3l3 3l-3 3" stroke="#5fb3ad" stroke-width="1.5" fill="none"/><path d="M740 738.5h8v9l-4 4l-4-4z" fill="none" stroke="#c8c8c8" stroke-width="1.2"/><path d="M753 747v6M750 750h6" stroke="#5fb3ad" stroke-width="1.2"/><path d="M773 739v11M773 744h9M773 740q4 0 5 4M773 749q4 0 5-5" stroke="#c8c8c8" stroke-width="1.1" fill="none"/><circle cx="773" cy="739" r="1.5" fill="#c8c8c8"/><circle cx="773" cy="744" r="1.5" fill="#c8c8c8"/><circle cx="773" cy="750" r="1.5" fill="#c8c8c8"/><circle cx="786" cy="744" r="2.5" fill="#5fb3ad"/><path d="M782 741.5l3 2.5l-3 2.5" stroke="#5fb3ad" stroke-width="1.2" fill="none"/><path d="M796.5 740.5h3l1-2h5l1 2h3.5v9.5h-13.5z" fill="none" stroke="#c8c8c8" stroke-width="1.1"/><circle cx="803.5" cy="745" r="2.5" fill="none" stroke="#c8c8c8" stroke-width="1.1"/><path d="M797 736.5l16 15" stroke="#5fb3ad" stroke-width="1.4"/><path d="M824 738.5h8v9l-4 4l-4-4z" fill="none" stroke="#c8c8c8" stroke-width="1.2"/><path d="M822 737l14 15" stroke="#5fb3ad" stroke-width="1.4"/><circle cx="1151.5" cy="742" r="5" fill="none" stroke="#c8c8c8" stroke-width="1.3"/><path d="M1148.5 742h6" stroke="#c8c8c8" stroke-width="1.3"/><path d="M1148 745.5l-4.5 4.5" stroke="#c8c8c8" stroke-width="2.2" stroke-linecap="round"/><circle cx="1177.5" cy="742" r="5" fill="none" stroke="#c8c8c8" stroke-width="1.3"/><path d="M1174.5 742h6M1177.5 739v6" stroke="#c8c8c8" stroke-width="1.3"/><path d="M1174 745.5l-4.5 4.5" stroke="#c8c8c8" stroke-width="2.2" stroke-linecap="round"/><path d="M66.5 758.5L86 766L66.5 773.5Z" fill="#008a00"/><path d="M66.5 773V775M74.5 773V775M82.5 773V775M90.5 773V775M98.5 773V775M106.5 771V775M114.5 773V775M122.5 773V775M130.5 773V775M138.5 773V775M146.5 773V775M154.5 771V775M162.5 773V775M170.5 773V775M178.5 773V775M186.5 773V775M194.5 773V775M202.5 771V775M210.5 773V775M218.5 773V775M226.5 773V775M234.5 773V775M242.5 773V775M250.5 771V775M258.5 773V775M266.5 773V775M274.5 773V775M282.5 773V775M290.5 773V775M298.5 771V775M306.5 773V775M314.5 773V775M322.5 773V775M330.5 773V775M338.5 773V775M346.5 771V775M354.5 773V775M362.5 773V775M370.5 773V775M378.5 773V775M386.5 773V775M394.5 771V775M402.5 773V775M410.5 773V775M418.5 773V775M426.5 773V775M434.5 773V775M442.5 771V775M450.5 773V775M458.5 773V775M466.5 773V775M474.5 773V775M482.5 773V775M490.5 771V775M498.5 773V775M506.5 773V775M514.5 773V775M522.5 773V775M530.5 773V775M538.5 771V775M546.5 773V775M554.5 773V775M562.5 773V775M570.5 773V775M578.5 773V775M586.5 771V775M594.5 773V775M602.5 773V775M610.5 773V775M618.5 773V775M626.5 773V775M634.5 771V775M642.5 773V775M650.5 773V775M658.5 773V775M666.5 773V775M674.5 773V775M682.5 771V775M690.5 773V775M698.5 773V775M706.5 773V775M714.5 773V775M722.5 773V775M730.5 771V775M738.5 773V775M746.5 773V775M754.5 773V775M762.5 773V775M770.5 773V775M778.5 771V775M786.5 773V775M794.5 773V775M802.5 773V775M810.5 773V775M818.5 773V775M826.5 771V775M834.5 773V775M842.5 773V775M850.5 773V775M858.5 773V775M866.5 773V775M874.5 771V775M882.5 773V775M890.5 773V775M898.5 773V775M906.5 773V775M914.5 773V775M922.5 771V775M930.5 773V775M938.5 773V775M946.5 773V775M954.5 773V775M962.5 773V775M970.5 771V775M978.5 773V775M986.5 773V775M994.5 773V775M1002.5 773V775M1010.5 773V775M1018.5 771V775M1026.5 773V775M1034.5 773V775M1042.5 773V775M1050.5 773V775M1058.5 773V775M1066.5 771V775M1074.5 773V775M1082.5 773V775M1090.5 773V775M1098.5 773V775M1106.5 773V775M1114.5 771V775M1122.5 773V775M1130.5 773V775M1138.5 773V775M1146.5 773V775M1154.5 773V775M1162.5 771V775M1170.5 773V775" stroke="#1f2a28" stroke-width="1"/><path d="M250.5 808V942" stroke="#b0b0b0" stroke-width="1"/><path d="M442.5 808V942" stroke="#b0b0b0" stroke-width="1"/><path d="M634.5 808V942" stroke="#b0b0b0" stroke-width="1"/><path d="M826.5 808V942" stroke="#b0b0b0" stroke-width="1"/><path d="M1018.5 808V942" stroke="#b0b0b0" stroke-width="1"/><path d="M58 816H1172" stroke="#5a5a5a" stroke-width="2"/><path d="M58 833H1172" stroke="#5a5a5a" stroke-width="2"/><path d="M66 850H1172" stroke="#5a5a5a" stroke-width="2"/><path d="M66 867H1172" stroke="#5a5a5a" stroke-width="2"/><polyline points="838.0,814 840.2,818 842.4,814 " fill="none" stroke="#5fb3ad" stroke-width="1"/><polyline points="1046.0,814 1048.2,818 1050.4,814 1052.6,818 1054.8,814 1057.0,818 1059.2,814 1061.4,818 1063.6,814 1065.8,818 1068.0,814 " fill="none" stroke="#5fb3ad" stroke-width="1"/><polyline points="1126.0,814 1128.2,818 1130.4,814 1132.6,818 1134.8,814 1137.0,818 1139.2,814 1141.4,818 1143.6,814 1145.8,818 1148.0,814 " fill="none" stroke="#5fb3ad" stroke-width="1"/><polyline points="822.0,831 824.2,835 826.4,831 828.6,835 830.8,831 833.0,835 835.2,831 837.4,835 839.6,831 841.8,835 844.0,831 " fill="none" stroke="#5fb3ad" stroke-width="1"/><polyline points="1030.0,831 1032.2,835 1034.4,831 1036.6,835 1038.8,831 1041.0,835 1043.2,831 " fill="none" stroke="#5fb3ad" stroke-width="1"/><polyline points="1046.0,831 1048.2,835 1050.4,831 1052.6,835 1054.8,831 1057.0,835 1059.2,831 1061.4,835 1063.6,831 1065.8,835 1068.0,831 " fill="none" stroke="#5fb3ad" stroke-width="1"/><polyline points="1046.0,848 1048.2,852 1050.4,848 1052.6,852 1054.8,848 1057.0,852 1059.2,848 1061.4,852 1063.6,848 1065.8,852 1068.0,848 " fill="none" stroke="#5fb3ad" stroke-width="1"/><polyline points="1126.0,848 1128.2,852 1130.4,848 1132.6,852 1134.8,848 1137.0,852 1139.2,848 1141.4,852 1143.6,848 1145.8,852 1148.0,848 " fill="none" stroke="#5fb3ad" stroke-width="1"/><path d="M58.5 775V942" stroke="#5fb3ad" stroke-width="1"/><path d="M53 770.5l5.5 5.5l5.5-5.5z" fill="#5fb3ad"/><circle cx="58" cy="816" r="3.7" fill="#c8c8c8" stroke="#0c0c0c" stroke-width="1.3"/><circle cx="66" cy="816" r="3.7" fill="#c8c8c8" stroke="#0c0c0c" stroke-width="1.3"/><circle cx="146" cy="816" r="3.7" fill="#c8c8c8" stroke="#0c0c0c" stroke-width="1.3"/><circle cx="162" cy="816" r="3.7" fill="#c8c8c8" stroke="#0c0c0c" stroke-width="1.3"/><circle cx="170" cy="816" r="3.7" fill="#c8c8c8" stroke="#0c0c0c" stroke-width="1.3"/><circle cx="186" cy="816" r="3.7" fill="#c8c8c8" stroke="#0c0c0c" stroke-width="1.3"/><circle cx="194" cy="816" r="3.7" fill="#c8c8c8" stroke="#0c0c0c" stroke-width="1.3"/><circle cx="202" cy="816" r="3.7" fill="#c8c8c8" stroke="#0c0c0c" stroke-width="1.3"/><circle cx="210" cy="816" r="3.7" fill="#c8c8c8" stroke="#0c0c0c" stroke-width="1.3"/><circle cx="218" cy="816" r="3.7" fill="#c8c8c8" stroke="#0c0c0c" stroke-width="1.3"/><circle cx="226" cy="816" r="3.7" fill="#c8c8c8" stroke="#0c0c0c" stroke-width="1.3"/><circle cx="234" cy="816" r="3.7" fill="#c8c8c8" stroke="#0c0c0c" stroke-width="1.3"/><circle cx="242" cy="816" r="3.7" fill="#c8c8c8" stroke="#0c0c0c" stroke-width="1.3"/><circle cx="250" cy="816" r="3.7" fill="#c8c8c8" stroke="#0c0c0c" stroke-width="1.3"/><circle cx="258" cy="816" r="3.7" fill="#c8c8c8" stroke="#0c0c0c" stroke-width="1.3"/><circle cx="266" cy="816" r="3.7" fill="#c8c8c8" stroke="#0c0c0c" stroke-width="1.3"/><circle cx="274" cy="816" r="3.7" fill="#c8c8c8" stroke="#0c0c0c" stroke-width="1.3"/><circle cx="282" cy="816" r="3.7" fill="#c8c8c8" stroke="#0c0c0c" stroke-width="1.3"/><circle cx="290" cy="816" r="3.7" fill="#c8c8c8" stroke="#0c0c0c" stroke-width="1.3"/><circle cx="298" cy="816" r="3.7" fill="#c8c8c8" stroke="#0c0c0c" stroke-width="1.3"/><circle cx="306" cy="816" r="3.7" fill="#c8c8c8" stroke="#0c0c0c" stroke-width="1.3"/><circle cx="314" cy="816" r="3.7" fill="#c8c8c8" stroke="#0c0c0c" stroke-width="1.3"/><circle cx="322" cy="816" r="3.7" fill="#c8c8c8" stroke="#0c0c0c" stroke-width="1.3"/><circle cx="418" cy="816" r="3.7" fill="#c8c8c8" stroke="#0c0c0c" stroke-width="1.3"/><circle cx="434" cy="816" r="3.7" fill="#c8c8c8" stroke="#0c0c0c" stroke-width="1.3"/><circle cx="442" cy="816" r="3.7" fill="#c8c8c8" stroke="#0c0c0c" stroke-width="1.3"/><circle cx="450" cy="816" r="3.7" fill="#c8c8c8" stroke="#0c0c0c" stroke-width="1.3"/><circle cx="458" cy="816" r="3.7" fill="#c8c8c8" stroke="#0c0c0c" stroke-width="1.3"/><circle cx="522" cy="816" r="3.7" fill="#c8c8c8" stroke="#0c0c0c" stroke-width="1.3"/><circle cx="530" cy="816" r="3.7" fill="#c8c8c8" stroke="#0c0c0c" stroke-width="1.3"/><circle cx="546" cy="816" r="3.7" fill="#c8c8c8" stroke="#0c0c0c" stroke-width="1.3"/><circle cx="578" cy="816" r="3.7" fill="#c8c8c8" stroke="#0c0c0c" stroke-width="1.3"/><circle cx="586" cy="816" r="3.7" fill="#c8c8c8" stroke="#0c0c0c" stroke-width="1.3"/><circle cx="602" cy="816" r="3.7" fill="#c8c8c8" stroke="#0c0c0c" stroke-width="1.3"/><circle cx="618" cy="816" r="3.7" fill="#c8c8c8" stroke="#0c0c0c" stroke-width="1.3"/><circle cx="626" cy="816" r="3.7" fill="#c8c8c8" stroke="#0c0c0c" stroke-width="1.3"/><circle cx="642" cy="816" r="3.7" fill="#c8c8c8" stroke="#0c0c0c" stroke-width="1.3"/><circle cx="650" cy="816" r="3.7" fill="#c8c8c8" stroke="#0c0c0c" stroke-width="1.3"/><circle cx="658" cy="816" r="3.7" fill="#c8c8c8" stroke="#0c0c0c" stroke-width="1.3"/><circle cx="674" cy="816" r="3.7" fill="#c8c8c8" stroke="#0c0c0c" stroke-width="1.3"/><circle cx="682" cy="816" r="3.7" fill="#c8c8c8" stroke="#0c0c0c" stroke-width="1.3"/><circle cx="690" cy="816" r="3.7" fill="#c8c8c8" stroke="#0c0c0c" stroke-width="1.3"/><circle cx="698" cy="816" r="3.7" fill="#c8c8c8" stroke="#0c0c0c" stroke-width="1.3"/><circle cx="706" cy="816" r="3.7" fill="#c8c8c8" stroke="#0c0c0c" stroke-width="1.3"/><circle cx="714" cy="816" r="3.7" fill="#c8c8c8" stroke="#0c0c0c" stroke-width="1.3"/><circle cx="722" cy="816" r="3.7" fill="#c8c8c8" stroke="#0c0c0c" stroke-width="1.3"/><circle cx="730" cy="816" r="3.7" fill="#c8c8c8" stroke="#0c0c0c" stroke-width="1.3"/><circle cx="786" cy="816" r="3.7" fill="#c8c8c8" stroke="#0c0c0c" stroke-width="1.3"/><circle cx="818" cy="816" r="3.7" fill="#c8c8c8" stroke="#0c0c0c" stroke-width="1.3"/><circle cx="826" cy="816" r="3.7" fill="#c8c8c8" stroke="#0c0c0c" stroke-width="1.3"/><circle cx="834" cy="816" r="3.7" fill="#c8c8c8" stroke="#0c0c0c" stroke-width="1.3"/><circle cx="842" cy="816" r="3.7" fill="#c8c8c8" stroke="#0c0c0c" stroke-width="1.3"/><circle cx="850" cy="816" r="3.7" fill="#c8c8c8" stroke="#0c0c0c" stroke-width="1.3"/><circle cx="906" cy="816" r="3.7" fill="#c8c8c8" stroke="#0c0c0c" stroke-width="1.3"/><circle cx="914" cy="816" r="3.7" fill="#c8c8c8" stroke="#0c0c0c" stroke-width="1.3"/><circle cx="930" cy="816" r="3.7" fill="#c8c8c8" stroke="#0c0c0c" stroke-width="1.3"/><circle cx="938" cy="816" r="3.7" fill="#c8c8c8" stroke="#0c0c0c" stroke-width="1.3"/><circle cx="946" cy="816" r="3.7" fill="#c8c8c8" stroke="#0c0c0c" stroke-width="1.3"/><circle cx="954" cy="816" r="3.7" fill="#c8c8c8" stroke="#0c0c0c" stroke-width="1.3"/><circle cx="962" cy="816" r="3.7" fill="#c8c8c8" stroke="#0c0c0c" stroke-width="1.3"/><circle cx="970" cy="816" r="3.7" fill="#c8c8c8" stroke="#0c0c0c" stroke-width="1.3"/><circle cx="978" cy="816" r="3.7" fill="#c8c8c8" stroke="#0c0c0c" stroke-width="1.3"/><circle cx="986" cy="816" r="3.7" fill="#c8c8c8" stroke="#0c0c0c" stroke-width="1.3"/><circle cx="1018" cy="816" r="3.7" fill="#c8c8c8" stroke="#0c0c0c" stroke-width="1.3"/><circle cx="1026" cy="816" r="3.7" fill="#c8c8c8" stroke="#0c0c0c" stroke-width="1.3"/><circle cx="1034" cy="816" r="3.7" fill="#c8c8c8" stroke="#0c0c0c" stroke-width="1.3"/><circle cx="1042" cy="816" r="3.7" fill="#c8c8c8" stroke="#0c0c0c" stroke-width="1.3"/><circle cx="1122" cy="816" r="3.7" fill="#c8c8c8" stroke="#0c0c0c" stroke-width="1.3"/><circle cx="58" cy="833" r="3.7" fill="#c8c8c8" stroke="#0c0c0c" stroke-width="1.3"/><circle cx="66" cy="833" r="3.7" fill="#c8c8c8" stroke="#0c0c0c" stroke-width="1.3"/><circle cx="146" cy="833" r="3.7" fill="#c8c8c8" stroke="#0c0c0c" stroke-width="1.3"/><circle cx="186" cy="833" r="3.7" fill="#c8c8c8" stroke="#0c0c0c" stroke-width="1.3"/><circle cx="194" cy="833" r="3.7" fill="#c8c8c8" stroke="#0c0c0c" stroke-width="1.3"/><circle cx="210" cy="833" r="3.7" fill="#c8c8c8" stroke="#0c0c0c" stroke-width="1.3"/><circle cx="218" cy="833" r="3.7" fill="#c8c8c8" stroke="#0c0c0c" stroke-width="1.3"/><circle cx="226" cy="833" r="3.7" fill="#c8c8c8" stroke="#0c0c0c" stroke-width="1.3"/><circle cx="234" cy="833" r="3.7" fill="#c8c8c8" stroke="#0c0c0c" stroke-width="1.3"/><circle cx="242" cy="833" r="3.7" fill="#c8c8c8" stroke="#0c0c0c" stroke-width="1.3"/><circle cx="258" cy="833" r="3.7" fill="#c8c8c8" stroke="#0c0c0c" stroke-width="1.3"/><circle cx="266" cy="833" r="3.7" fill="#c8c8c8" stroke="#0c0c0c" stroke-width="1.3"/><circle cx="274" cy="833" r="3.7" fill="#c8c8c8" stroke="#0c0c0c" stroke-width="1.3"/><circle cx="282" cy="833" r="3.7" fill="#c8c8c8" stroke="#0c0c0c" stroke-width="1.3"/><circle cx="290" cy="833" r="3.7" fill="#c8c8c8" stroke="#0c0c0c" stroke-width="1.3"/><circle cx="298" cy="833" r="3.7" fill="#c8c8c8" stroke="#0c0c0c" stroke-width="1.3"/><circle cx="314" cy="833" r="3.7" fill="#c8c8c8" stroke="#0c0c0c" stroke-width="1.3"/><circle cx="418" cy="833" r="3.7" fill="#c8c8c8" stroke="#0c0c0c" stroke-width="1.3"/><circle cx="442" cy="833" r="3.7" fill="#c8c8c8" stroke="#0c0c0c" stroke-width="1.3"/><circle cx="458" cy="833" r="3.7" fill="#c8c8c8" stroke="#0c0c0c" stroke-width="1.3"/><circle cx="578" cy="833" r="3.7" fill="#c8c8c8" stroke="#0c0c0c" stroke-width="1.3"/><circle cx="618" cy="833" r="3.7" fill="#c8c8c8" stroke="#0c0c0c" stroke-width="1.3"/><circle cx="642" cy="833" r="3.7" fill="#c8c8c8" stroke="#0c0c0c" stroke-width="1.3"/><circle cx="658" cy="833" r="3.7" fill="#c8c8c8" stroke="#0c0c0c" stroke-width="1.3"/><circle cx="666" cy="833" r="3.7" fill="#c8c8c8" stroke="#0c0c0c" stroke-width="1.3"/><circle cx="674" cy="833" r="3.7" fill="#c8c8c8" stroke="#0c0c0c" stroke-width="1.3"/><circle cx="682" cy="833" r="3.7" fill="#c8c8c8" stroke="#0c0c0c" stroke-width="1.3"/><circle cx="690" cy="833" r="3.7" fill="#c8c8c8" stroke="#0c0c0c" stroke-width="1.3"/><circle cx="698" cy="833" r="3.7" fill="#c8c8c8" stroke="#0c0c0c" stroke-width="1.3"/><circle cx="706" cy="833" r="3.7" fill="#c8c8c8" stroke="#0c0c0c" stroke-width="1.3"/><circle cx="714" cy="833" r="3.7" fill="#c8c8c8" stroke="#0c0c0c" stroke-width="1.3"/><circle cx="730" cy="833" r="3.7" fill="#c8c8c8" stroke="#0c0c0c" stroke-width="1.3"/><circle cx="786" cy="833" r="3.7" fill="#c8c8c8" stroke="#0c0c0c" stroke-width="1.3"/><circle cx="818" cy="833" r="3.7" fill="#c8c8c8" stroke="#0c0c0c" stroke-width="1.3"/><circle cx="930" cy="833" r="3.7" fill="#c8c8c8" stroke="#0c0c0c" stroke-width="1.3"/><circle cx="954" cy="833" r="3.7" fill="#c8c8c8" stroke="#0c0c0c" stroke-width="1.3"/><circle cx="962" cy="833" r="3.7" fill="#c8c8c8" stroke="#0c0c0c" stroke-width="1.3"/><circle cx="978" cy="833" r="3.7" fill="#c8c8c8" stroke="#0c0c0c" stroke-width="1.3"/><circle cx="986" cy="833" r="3.7" fill="#c8c8c8" stroke="#0c0c0c" stroke-width="1.3"/><circle cx="1026" cy="833" r="3.7" fill="#c8c8c8" stroke="#0c0c0c" stroke-width="1.3"/><circle cx="1042" cy="833" r="3.7" fill="#c8c8c8" stroke="#0c0c0c" stroke-width="1.3"/><circle cx="58" cy="850" r="3.7" fill="#c8c8c8" stroke="#0c0c0c" stroke-width="1.3"/><circle cx="146" cy="850" r="3.7" fill="#c8c8c8" stroke="#0c0c0c" stroke-width="1.3"/><circle cx="162" cy="850" r="3.7" fill="#c8c8c8" stroke="#0c0c0c" stroke-width="1.3"/><circle cx="170" cy="850" r="3.7" fill="#c8c8c8" stroke="#0c0c0c" stroke-width="1.3"/><circle cx="178" cy="850" r="3.7" fill="#c8c8c8" stroke="#0c0c0c" stroke-width="1.3"/><circle cx="186" cy="850" r="3.7" fill="#c8c8c8" stroke="#0c0c0c" stroke-width="1.3"/><circle cx="194" cy="850" r="3.7" fill="#c8c8c8" stroke="#0c0c0c" stroke-width="1.3"/><circle cx="202" cy="850" r="3.7" fill="#c8c8c8" stroke="#0c0c0c" stroke-width="1.3"/><circle cx="210" cy="850" r="3.7" fill="#c8c8c8" stroke="#0c0c0c" stroke-width="1.3"/><circle cx="218" cy="850" r="3.7" fill="#c8c8c8" stroke="#0c0c0c" stroke-width="1.3"/><circle cx="226" cy="850" r="3.7" fill="#c8c8c8" stroke="#0c0c0c" stroke-width="1.3"/><circle cx="234" cy="850" r="3.7" fill="#c8c8c8" stroke="#0c0c0c" stroke-width="1.3"/><circle cx="242" cy="850" r="3.7" fill="#c8c8c8" stroke="#0c0c0c" stroke-width="1.3"/><circle cx="274" cy="850" r="3.7" fill="#c8c8c8" stroke="#0c0c0c" stroke-width="1.3"/><circle cx="282" cy="850" r="3.7" fill="#c8c8c8" stroke="#0c0c0c" stroke-width="1.3"/><circle cx="290" cy="850" r="3.7" fill="#c8c8c8" stroke="#0c0c0c" stroke-width="1.3"/><circle cx="298" cy="850" r="3.7" fill="#c8c8c8" stroke="#0c0c0c" stroke-width="1.3"/><circle cx="314" cy="850" r="3.7" fill="#c8c8c8" stroke="#0c0c0c" stroke-width="1.3"/><circle cx="418" cy="850" r="3.7" fill="#c8c8c8" stroke="#0c0c0c" stroke-width="1.3"/><circle cx="426" cy="850" r="3.7" fill="#c8c8c8" stroke="#0c0c0c" stroke-width="1.3"/><circle cx="442" cy="850" r="3.7" fill="#c8c8c8" stroke="#0c0c0c" stroke-width="1.3"/><circle cx="458" cy="850" r="3.7" fill="#c8c8c8" stroke="#0c0c0c" stroke-width="1.3"/><circle cx="578" cy="850" r="3.7" fill="#c8c8c8" stroke="#0c0c0c" stroke-width="1.3"/><circle cx="618" cy="850" r="3.7" fill="#c8c8c8" stroke="#0c0c0c" stroke-width="1.3"/><circle cx="642" cy="850" r="3.7" fill="#c8c8c8" stroke="#0c0c0c" stroke-width="1.3"/><circle cx="658" cy="850" r="3.7" fill="#c8c8c8" stroke="#0c0c0c" stroke-width="1.3"/><circle cx="666" cy="850" r="3.7" fill="#c8c8c8" stroke="#0c0c0c" stroke-width="1.3"/><circle cx="674" cy="850" r="3.7" fill="#c8c8c8" stroke="#0c0c0c" stroke-width="1.3"/><circle cx="682" cy="850" r="3.7" fill="#c8c8c8" stroke="#0c0c0c" stroke-width="1.3"/><circle cx="698" cy="850" r="3.7" fill="#c8c8c8" stroke="#0c0c0c" stroke-width="1.3"/><circle cx="706" cy="850" r="3.7" fill="#c8c8c8" stroke="#0c0c0c" stroke-width="1.3"/><circle cx="714" cy="850" r="3.7" fill="#c8c8c8" stroke="#0c0c0c" stroke-width="1.3"/><circle cx="722" cy="850" r="3.7" fill="#c8c8c8" stroke="#0c0c0c" stroke-width="1.3"/><circle cx="730" cy="850" r="3.7" fill="#c8c8c8" stroke="#0c0c0c" stroke-width="1.3"/><circle cx="786" cy="850" r="3.7" fill="#c8c8c8" stroke="#0c0c0c" stroke-width="1.3"/><circle cx="818" cy="850" r="3.7" fill="#c8c8c8" stroke="#0c0c0c" stroke-width="1.3"/><circle cx="826" cy="850" r="3.7" fill="#c8c8c8" stroke="#0c0c0c" stroke-width="1.3"/><circle cx="850" cy="850" r="3.7" fill="#c8c8c8" stroke="#0c0c0c" stroke-width="1.3"/><circle cx="914" cy="850" r="3.7" fill="#c8c8c8" stroke="#0c0c0c" stroke-width="1.3"/><circle cx="922" cy="850" r="3.7" fill="#c8c8c8" stroke="#0c0c0c" stroke-width="1.3"/><circle cx="930" cy="850" r="3.7" fill="#c8c8c8" stroke="#0c0c0c" stroke-width="1.3"/><circle cx="938" cy="850" r="3.7" fill="#c8c8c8" stroke="#0c0c0c" stroke-width="1.3"/><circle cx="954" cy="850" r="3.7" fill="#c8c8c8" stroke="#0c0c0c" stroke-width="1.3"/><circle cx="986" cy="850" r="3.7" fill="#c8c8c8" stroke="#0c0c0c" stroke-width="1.3"/><circle cx="1026" cy="850" r="3.7" fill="#c8c8c8" stroke="#0c0c0c" stroke-width="1.3"/><circle cx="1042" cy="850" r="3.7" fill="#c8c8c8" stroke="#0c0c0c" stroke-width="1.3"/><circle cx="1122" cy="850" r="3.7" fill="#c8c8c8" stroke="#0c0c0c" stroke-width="1.3"/><circle cx="58" cy="867" r="3.7" fill="#c8c8c8" stroke="#0c0c0c" stroke-width="1.3"/><circle cx="818" cy="867" r="3.7" fill="#c8c8c8" stroke="#0c0c0c" stroke-width="1.3"/><circle cx="994" cy="867" r="3.7" fill="#c8c8c8" stroke="#0c0c0c" stroke-width="1.3"/><circle cx="38.5" cy="816" r="3" fill="#c8c8c8"/><circle cx="38.5" cy="833" r="3" fill="#c8c8c8"/><circle cx="38.5" cy="850" r="3" fill="#c8c8c8"/><circle cx="38.5" cy="867" r="3" fill="#c8c8c8"/><path d="M16.09 810.80H23.91A2.32 2.32 0 1 1 27.78 812.00A2.32 2.32 0 1 1 23.91 813.20H16.09A2.32 2.32 0 1 1 12.22 812.00A2.32 2.32 0 1 1 16.09 810.80Z" fill="none" stroke="#c8c8c8" stroke-width="1"/><path d="M16.5 812.0H23.5" stroke="#8a8a8a" stroke-width="1.5"/><path d="M22.5 816.5a3.2 3.2 0 1 0 1.2 3" stroke="#c8c8c8" stroke-width="1.1" fill="none"/><path d="M21.5 815l3 1l-2 2z" fill="#c8c8c8"/><path d="M16.09 827.80H23.91A2.32 2.32 0 1 1 27.78 829.00A2.32 2.32 0 1 1 23.91 830.20H16.09A2.32 2.32 0 1 1 12.22 829.00A2.32 2.32 0 1 1 16.09 827.80Z" fill="none" stroke="#c8c8c8" stroke-width="1"/><path d="M16.5 829.0H23.5" stroke="#8a8a8a" stroke-width="1.5"/><path d="M20 830v10M15.5 835h9M18.5 831.5l1.5-1.5l1.5 1.5M18.5 838.5l1.5 1.5l1.5-1.5" stroke="#c8c8c8" stroke-width="1" fill="none"/><path d="M16.09 845.80H23.91A2.32 2.32 0 1 1 27.78 847.00A2.32 2.32 0 1 1 23.91 848.20H16.09A2.32 2.32 0 1 1 12.22 847.00A2.32 2.32 0 1 1 16.09 845.80Z" fill="none" stroke="#c8c8c8" stroke-width="1"/><path d="M16.5 847.0H23.5" stroke="#8a8a8a" stroke-width="1.5"/><path d="M12 853.5h17M12 853.5l2-1.8M12 853.5l2 1.8M29 853.5l-2-1.8M29 853.5l-2 1.8" stroke="#c8c8c8" stroke-width="1.1" fill="none"/><path d="M16.09 861.80H23.91A2.32 2.32 0 1 1 27.78 863.00A2.32 2.32 0 1 1 23.91 864.20H16.09A2.32 2.32 0 1 1 12.22 863.00A2.32 2.32 0 1 1 16.09 861.80Z" fill="none" stroke="#c8c8c8" stroke-width="1"/><path d="M16.5 863.0H23.5" stroke="#8a8a8a" stroke-width="1.5"/><rect x="16" y="869" width="6" height="5" fill="#c8c8c8"/><path d="M17 869v-2a2 2 0 0 1 4 0v2" stroke="#c8c8c8" stroke-width="1" fill="none"/><path d="M1177.5 771l5-7l5 7z" fill="#777"/><path d="M1177.5 926l5 7l5-7z" fill="#777"/><path d="M64 947.5l-7 5l7 5z" fill="#777"/><path d="M1158 947.5l7 5l-7 5z" fill="#777"/></svg>
<div class="a" style="left:1192px;top:700px;width:6px;height:263px;background:#1c1c1c;"></div>
<div class="a" style="left:1198px;top:706px;width:242px;height:257px;background:#333;"></div>
<div class="a" style="left:1198px;top:706px;width:242px;height:19px;background:#1f1f1f;"></div>
<div class="t" style="left:1198px;top:710px;width:242px;text-align:center;">Layers</div>
<div class="a" style="left:1199px;top:726px;width:23px;height:18px;background:#1f1f1f;border-radius:3px"></div>
<div class="a" style="left:1224px;top:726px;width:22px;height:18px;background:#1f1f1f;border-radius:3px"></div>
<div class="a" style="left:1248px;top:726px;width:24px;height:18px;background:#1f1f1f;border-radius:3px"></div>
<div class="a" style="left:1274px;top:726px;width:22px;height:18px;background:#1f1f1f;border-radius:3px"></div>
<div class="a" style="left:1298px;top:726px;width:24px;height:18px;background:#1f1f1f;border-radius:3px"></div>
<div class="a" style="left:1323px;top:726px;width:23px;height:18px;background:#1f1f1f;border-radius:3px"></div>
<div class="a" style="left:1396px;top:726px;width:23px;height:18px;background:#1f1f1f;border-radius:3px"></div>
<div class="a" style="left:1420px;top:726px;width:19px;height:18px;background:#1f1f1f;border-radius:3px"></div>
<div class="a" style="left:1200px;top:747px;width:110px;height:24px;background:#1f1f1f;border-radius:1px"></div><div class="t" style="left:1208px;top:753px;">Name cont...</div><div class="a" style="left:1292px;top:754px;width:0;height:0;border-left:5.0px solid transparent;border-right:5.0px solid transparent;border-top:9px solid #8a8a8a"></div>
<div class="a" style="left:1313px;top:748px;width:121px;height:22px;background:#c0c0c0;border-radius:3px;border:1px solid #d8d8d8"></div>
<div class="a" style="left:1199px;top:775px;width:240px;height:25px;background:#1f1f1f;"></div>
<div class="a" style="left:1229px;top:775px;width:1px;height:25px;background:#333;"></div>
<div class="a" style="left:1257px;top:775px;width:1px;height:25px;background:#333;"></div>
<div class="a" style="left:1422px;top:775px;width:1px;height:25px;background:#333;"></div>
<div class="t" style="left:1262px;top:781px;">Name</div>
<div class="a" style="left:1199px;top:800px;width:219px;height:142px;background:#333;"></div>
<div class="a" style="left:1200px;top:801px;width:218px;height:24px;background:#6aa8a0;"></div>
<div class="a" style="left:1207px;top:804px;width:20px;height:18px;background:#262626;border-radius:4px;border:1px solid #1a1a1a"></div>
<div class="a" style="left:1235px;top:805px;width:16px;height:16px;background:#1f1f1f;"></div>
<div class="t" style="left:1306px;top:806px;color:#111;">Bigsby</div>
<div class="a" style="left:1418px;top:800px;width:21px;height:142px;background:#1f1f1f;"></div>
<div class="a" style="left:1418px;top:801px;width:21px;height:20px;background:#2a2a2a;"></div>
<div class="a" style="left:1418px;top:921px;width:21px;height:20px;background:#2a2a2a;"></div>
<div class="a" style="left:1199px;top:942px;width:219px;height:20px;background:#1f1f1f;"></div>
<div class="a" style="left:1221px;top:943px;width:40px;height:19px;background:#333;"></div>
<div class="a" style="left:1418px;top:942px;width:21px;height:21px;background:#333;"></div>
<svg class="a" style="left:0px;top:0px;pointer-events:none" width="1448" height="991" viewBox="0 0 1448 991"><path d="M1203 741.5v-7.5l3-3h5.5v10.5z M1203 734h3v-3" fill="none" stroke="#c8c8c8" stroke-width="1.1"/><path d="M1215.5 731.5v8M1211.5 735.5h8" stroke="#5fb3ad" stroke-width="1.8"/><path d="M1230.5 741.5v-9h6.5v9z M1232.5 732.5v-3h7v10h-2.5" fill="none" stroke="#c8c8c8" stroke-width="1.1"/><path d="M1252 741.5v-7.5l3-3h5.5v10.5z M1252 734h3v-3" fill="none" stroke="#c8c8c8" stroke-width="1.1"/><path d="M1259 736h8M1264.5 733.5l2.5 2.5l-2.5 2.5" stroke="#5fb3ad" stroke-width="1.6" fill="none"/><path d="M1281.5 732.5h6v8h-6z M1280.5 731.5h8M1283 730h3" fill="none" stroke="#5a5a5a" stroke-width="1"/><circle cx="1304.5" cy="735" r="1.3" fill="#c8c8c8"/><circle cx="1310" cy="735" r="1.3" fill="#c8c8c8"/><circle cx="1315.5" cy="735" r="1.3" fill="#c8c8c8"/><path d="M1328.5 740.5v-7h6.5v7z M1330.5 733.5v-2.5h6.5v7h-2 M1332.5 731v-2h6.5v7h-2" fill="none" stroke="#c8c8c8" stroke-width="1.1"/><path d="M1402 730.5h11v6l-4 4h-7z M1409 740.5v-4h4" fill="none" stroke="#c8c8c8" stroke-width="1.1"/><path d="M1424 738l5.5-5.5l5.5 5.5" stroke="#c8c8c8" stroke-width="2" fill="none"/><circle cx="1212" cy="787.5" r="2.6" fill="none" stroke="#c8c8c8" stroke-width="1.2"/><circle cx="1216" cy="787.5" r="2.6" fill="#1f1f1f" stroke="#c8c8c8" stroke-width="1.2"/><circle cx="1216" cy="787.5" r="1" fill="#c8c8c8"/><circle cx="1243" cy="788.5" r="3.6" fill="none" stroke="#c8c8c8" stroke-width="1.1"/><path d="M1241 783.5h4M1243 788.5v-2" stroke="#c8c8c8" stroke-width="1.1"/><path d="M1427.5 784.5l5.5 5.5l5.5-5.5z" fill="#c8c8c8"/><circle cx="1213.5" cy="813" r="3.6" fill="#fff" stroke="#111" stroke-width="1"/><circle cx="1220" cy="813" r="3.6" fill="#fff" stroke="#111" stroke-width="1"/><circle cx="1214.3" cy="813.5" r="1.5" fill="#111"/><circle cx="1220.8" cy="813.5" r="1.5" fill="#111"/><path d="M1268 807l9 6l-9 6z" fill="#b8d4d0"/><path d="M1288.59 811.80H1295.41A2.32 2.32 0 1 1 1299.28 813.00A2.32 2.32 0 1 1 1295.41 814.20H1288.59A2.32 2.32 0 1 1 1284.72 813.00A2.32 2.32 0 1 1 1288.59 811.80Z" fill="none" stroke="#c8dcd8" stroke-width="1.1"/><path d="M1423 816l5-7l5 7z" fill="#5a5a5a"/><path d="M1423 926l5 7l5-7z" fill="#6a6a6a"/><path d="M1215 947.5l-7 5l7 5z" fill="#666"/><path d="M1403 947.5l7 5l-7 5z" fill="#666"/></svg>
<div class="a" style="left:8px;top:962px;width:1432px;height:2px;background:#161616;"></div>
<div class="a" style="left:8px;top:964px;width:1432px;height:19px;background:#333;"></div>
<div class="t" style="left:12px;top:967px;font-size:13.5px;">Click to select a bone (hold &lt;shift&gt; or &lt;ctrl/cmd&gt; to select more than one bone)</div>
<div class="t" style="right:12px;top:967px;text-align:right;font-size:13.5px;">Frame: 0</div>
</body></html>
